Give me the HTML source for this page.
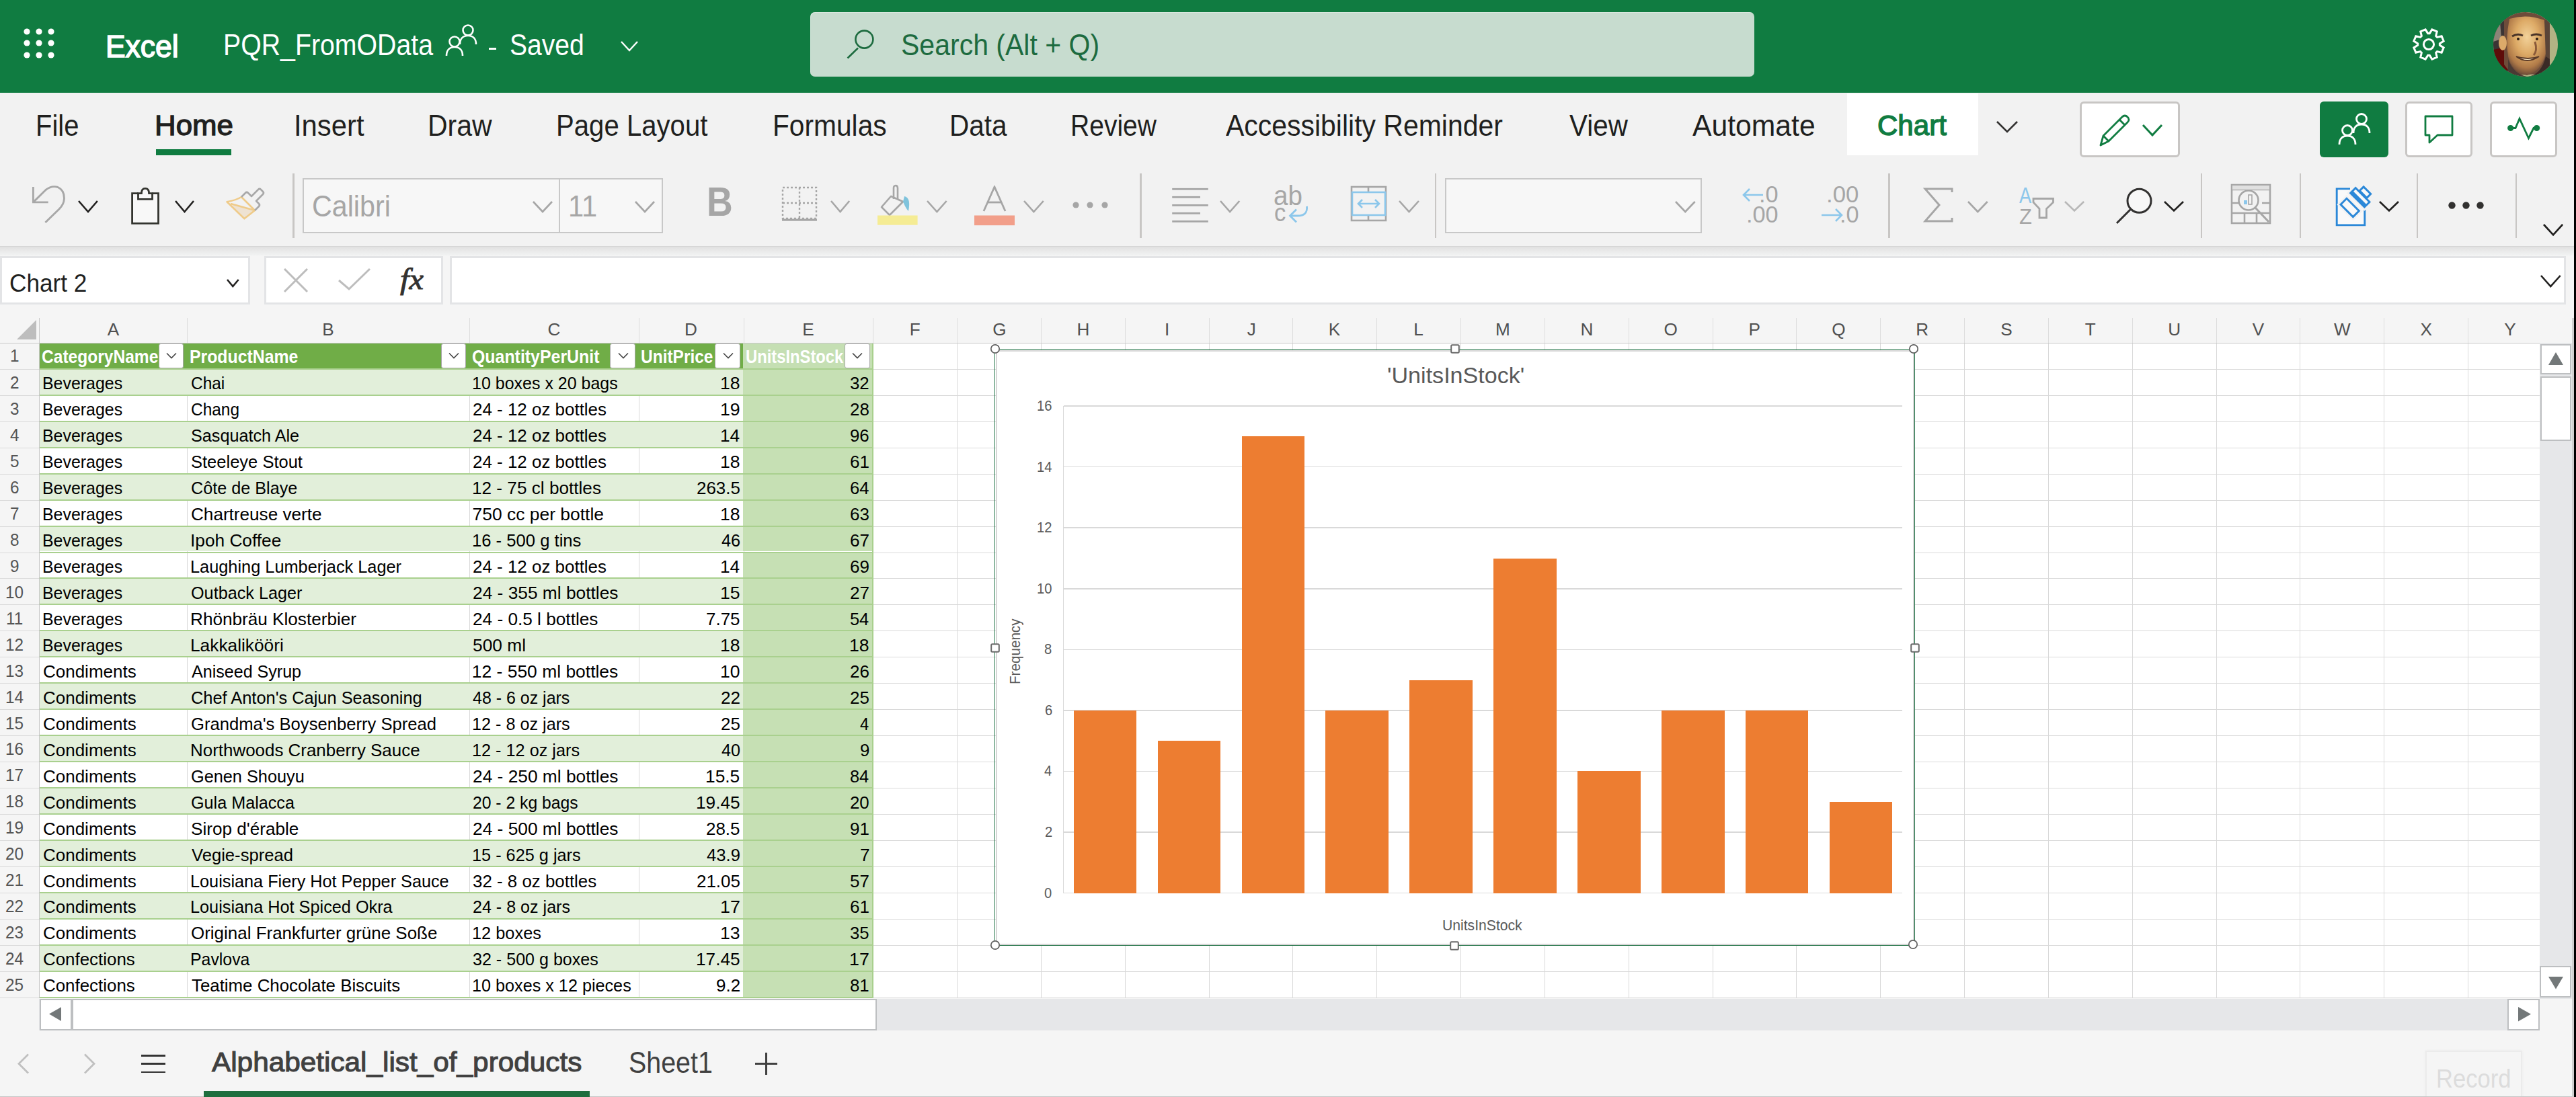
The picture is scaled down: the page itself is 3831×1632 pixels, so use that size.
<!DOCTYPE html><html><head><meta charset="utf-8"><style>
html,body{margin:0;padding:0;width:3831px;height:1632px;overflow:hidden;background:#f5f5f5}
.r{position:absolute}
.t{position:absolute;white-space:nowrap;font-family:"Liberation Sans",sans-serif}
</style></head><body>
<div class="r" style="left:0.00px;top:0.00px;width:3831.00px;height:1632.00px;background:#F5F5F5;"></div>
<div class="r" style="left:0.00px;top:0.00px;width:3831.00px;height:138.00px;background:#107C41;"></div>
<div class="r" style="left:0.00px;top:138.00px;width:3831.00px;height:228.00px;background:#F2F2F2;"></div>
<div class="r" style="left:0.00px;top:365.50px;width:3831.00px;height:15.50px;background:linear-gradient(#D0D0D0,#E2E2E2 12%,#E8E8E8 40%,#F0F1F1 85%,#F5F5F5);"></div>
<svg class="r" style="left:35.00px;top:41.50px" width="10" height="10" viewBox="0 0 10 10"><circle cx="5" cy="5" r="4.6" fill="#fff"/></svg>
<svg class="r" style="left:35.00px;top:59.30px" width="10" height="10" viewBox="0 0 10 10"><circle cx="5" cy="5" r="4.6" fill="#fff"/></svg>
<svg class="r" style="left:35.00px;top:77.20px" width="10" height="10" viewBox="0 0 10 10"><circle cx="5" cy="5" r="4.6" fill="#fff"/></svg>
<svg class="r" style="left:53.40px;top:41.50px" width="10" height="10" viewBox="0 0 10 10"><circle cx="5" cy="5" r="4.6" fill="#fff"/></svg>
<svg class="r" style="left:53.40px;top:59.30px" width="10" height="10" viewBox="0 0 10 10"><circle cx="5" cy="5" r="4.6" fill="#fff"/></svg>
<svg class="r" style="left:53.40px;top:77.20px" width="10" height="10" viewBox="0 0 10 10"><circle cx="5" cy="5" r="4.6" fill="#fff"/></svg>
<svg class="r" style="left:71.30px;top:41.50px" width="10" height="10" viewBox="0 0 10 10"><circle cx="5" cy="5" r="4.6" fill="#fff"/></svg>
<svg class="r" style="left:71.30px;top:59.30px" width="10" height="10" viewBox="0 0 10 10"><circle cx="5" cy="5" r="4.6" fill="#fff"/></svg>
<svg class="r" style="left:71.30px;top:77.20px" width="10" height="10" viewBox="0 0 10 10"><circle cx="5" cy="5" r="4.6" fill="#fff"/></svg>
<div class="t" style="left:157.37px;top:45.82px;font-size:46.51px;line-height:46.51px;color:#FFFFFF;transform:scaleX(0.9551);transform-origin:0 0;-webkit-text-stroke:1.6px #FFFFFF;">Excel</div>
<div class="t" style="left:332.46px;top:46.08px;font-size:43.61px;line-height:43.61px;color:#FFFFFF;transform:scaleX(0.9003);transform-origin:0 0;">PQR_FromOData</div>
<svg class="r" style="left:660.00px;top:34.00px" width="56" height="52" viewBox="0 0 56 52"><g fill="none" stroke="#fff" stroke-width="2.6"><circle cx="16" cy="28" r="7.5"/><path d="M4 49 C4 40 9 36 16 36 C23 36 28 40 28 49"/><circle cx="36" cy="11" r="7.5"/><path d="M24 32 C24 23 29 19 36 19 C43 19 48 23 48 32"/></g></svg>
<div class="r" style="left:727.00px;top:71.00px;width:11.00px;height:2.60px;background:#FFFFFF;"></div>
<div class="t" style="left:758.21px;top:46.08px;font-size:43.61px;line-height:43.61px;color:#FFFFFF;transform:scaleX(0.8957);transform-origin:0 0;">Saved</div>
<svg class="r" style="left:922.00px;top:60.00px" width="28" height="18" viewBox="0 0 28 18"><path d="M2 2 L14 15 L26 2" fill="none" stroke="#fff" stroke-width="2.4"/></svg>
<div class="r" style="left:1205.00px;top:18.00px;width:1404.00px;height:95.60px;background:#C7DCCF;border-radius:7px;box-shadow:inset 1px 1px 0 rgba(255,255,255,0.35)"></div>
<svg class="r" style="left:1255.00px;top:40.00px" width="50" height="52" viewBox="0 0 50 52"><g fill="none" stroke="#1D6B3F" stroke-width="2.6"><circle cx="30.4" cy="18.6" r="13"/><path d="M21 31.5 L5.5 46.5"/></g></svg>
<div class="t" style="left:1339.52px;top:45.98px;font-size:43.61px;line-height:43.61px;color:#1D6B3F;transform:scaleX(0.9405);transform-origin:0 0;">Search (Alt + Q)</div>
<svg class="r" style="left:3587.00px;top:40.80px" width="50" height="50" viewBox="0 0 50 50"><path d="M26.29 8.65 L29.91 2.84 L37.20 5.86 L35.65 12.53 L37.47 14.35 L44.14 12.80 L47.16 20.09 L41.35 23.71 L41.35 26.29 L47.16 29.91 L44.14 37.20 L37.47 35.65 L35.65 37.47 L37.20 44.14 L29.91 47.16 L26.29 41.35 L23.71 41.35 L20.09 47.16 L12.80 44.14 L14.35 37.47 L12.53 35.65 L5.86 37.20 L2.84 29.91 L8.65 26.29 L8.65 23.71 L2.84 20.09 L5.86 12.80 L12.53 14.35 L14.35 12.53 L12.80 5.86 L20.09 2.84 L23.71 8.65 Z" fill="none" stroke="#fff" stroke-width="3" stroke-linejoin="miter"/><circle cx="25" cy="25" r="7.6" fill="none" stroke="#fff" stroke-width="3"/></svg>
<svg class="r" style="left:3708.00px;top:18.00px" width="96" height="96" viewBox="0 0 96 96"><defs><clipPath id="av"><circle cx="48" cy="48" r="48"/></clipPath>
<radialGradient id="sk" cx="0.5" cy="0.35" r="0.65"><stop offset="0" stop-color="#F2D29A"/><stop offset="0.45" stop-color="#DDAA66"/><stop offset="0.8" stop-color="#B07A48"/><stop offset="1" stop-color="#6A4A38"/></radialGradient></defs>
<g clip-path="url(#av)"><rect width="96" height="96" fill="#B2B384"/>
<path d="M0 0 L24 0 L22 96 L0 96Z" fill="#3C3434"/>
<path d="M0 18 L10 14 L12 40 L0 44Z" fill="#8C8478"/>
<path d="M0 56 L18 52 L26 80 L14 96 L0 96Z" fill="#5E0C0A"/>
<path d="M16 4 Q48 -6 80 8 L82 80 L70 92 L28 94 L16 78Z" fill="#6E4C3A"/>
<path d="M24 10 Q50 2 76 12 Q82 40 78 62 Q72 88 50 94 Q28 90 22 66 Q18 40 24 10Z" fill="url(#sk)"/>
<ellipse cx="14" cy="46" rx="6" ry="11" fill="#DCAA6A"/>
<path d="M28 36 Q36 31 44 35" stroke="#4A3428" stroke-width="3" fill="none"/><path d="M56 35 Q64 31 72 35" stroke="#4A3428" stroke-width="3" fill="none"/>
<circle cx="37" cy="40" r="2" fill="#2A1A14"/><circle cx="65" cy="40" r="2" fill="#2A1A14"/>
<path d="M62 44 Q66 58 60 64" stroke="#8A5A3A" stroke-width="3" fill="none"/>
<path d="M34 66 Q50 78 68 66 Q52 72 34 66Z" fill="#F6E6C4" stroke="#5A3A28" stroke-width="1.8"/>
<path d="M22 70 Q30 92 50 96 L22 96Z" fill="#4A3A34"/><path d="M78 66 Q72 92 52 96 L84 96 L84 66Z" fill="#3A2A26"/>
<path d="M76 12 L84 10 L84 70 L78 66Z" fill="#5A4438"/></g></svg>
<div class="t" style="left:52.62px;top:164.35px;font-size:45.06px;line-height:45.06px;color:#201F1E;transform:scaleX(0.8866);transform-origin:0 0;">File</div>
<div class="t" style="left:437.20px;top:164.35px;font-size:45.06px;line-height:45.06px;color:#201F1E;transform:scaleX(0.9280);transform-origin:0 0;">Insert</div>
<div class="t" style="left:636.03px;top:164.35px;font-size:45.06px;line-height:45.06px;color:#201F1E;transform:scaleX(0.9105);transform-origin:0 0;">Draw</div>
<div class="t" style="left:827.00px;top:164.35px;font-size:45.06px;line-height:45.06px;color:#201F1E;transform:scaleX(0.8909);transform-origin:0 0;">Page Layout</div>
<div class="t" style="left:1149.16px;top:164.35px;font-size:45.06px;line-height:45.06px;color:#201F1E;transform:scaleX(0.9036);transform-origin:0 0;">Formulas</div>
<div class="t" style="left:1411.98px;top:164.35px;font-size:45.06px;line-height:45.06px;color:#201F1E;transform:scaleX(0.8985);transform-origin:0 0;">Data</div>
<div class="t" style="left:1592.29px;top:164.35px;font-size:45.06px;line-height:45.06px;color:#201F1E;transform:scaleX(0.8663);transform-origin:0 0;">Review</div>
<div class="t" style="left:1822.61px;top:164.35px;font-size:45.06px;line-height:45.06px;color:#201F1E;transform:scaleX(0.9090);transform-origin:0 0;">Accessibility Reminder</div>
<div class="t" style="left:2334.12px;top:164.35px;font-size:45.06px;line-height:45.06px;color:#201F1E;transform:scaleX(0.8968);transform-origin:0 0;">View</div>
<div class="t" style="left:2516.91px;top:164.35px;font-size:45.06px;line-height:45.06px;color:#201F1E;transform:scaleX(0.9476);transform-origin:0 0;">Automate</div>
<div class="t" style="left:229.50px;top:165.30px;font-size:43.17px;line-height:43.17px;color:#201F1E;transform:scaleX(1.0155);transform-origin:0 0;-webkit-text-stroke:1.3px #201F1E;">Home</div>
<div class="r" style="left:232.00px;top:222.30px;width:112.20px;height:8.70px;background:#107C41;"></div>
<div class="r" style="left:2747.00px;top:139.00px;width:195.00px;height:92.00px;background:#FFFFFF;"></div>
<div class="t" style="left:2792.05px;top:165.37px;font-size:43.02px;line-height:43.02px;color:#107C41;transform:scaleX(0.9776);transform-origin:0 0;-webkit-text-stroke:1.4px #107C41;">Chart</div>
<svg class="r" style="left:2968.00px;top:178.00px" width="34" height="22" viewBox="0 0 34 22"><path d="M2 3 L17 18 L32 3" fill="none" stroke="#323130" stroke-width="2.6"/></svg>
<div class="r" style="left:3093.00px;top:150.50px;width:148.60px;height:83.00px;background:#FFFFFF;border:3px solid #C8C6C4;border-radius:6px;box-sizing:border-box;"></div>
<svg class="r" style="left:3118.00px;top:168.00px" width="50" height="54" viewBox="0 0 50 54"><g fill="none" stroke="#107C41" stroke-width="2.8" stroke-linejoin="round"><path d="M6 48 L10 34 L38 6 Q42 2 46 6 Q50 10 46 14 L18 42 Z"/><path d="M34 10 L42 18"/><path d="M10 34 L18 42"/></g></svg>
<svg class="r" style="left:3184.00px;top:183.00px" width="34" height="22" viewBox="0 0 34 22"><path d="M3 3 L17 18 L31 3" fill="none" stroke="#107C41" stroke-width="3"/></svg>
<div class="r" style="left:3450.00px;top:150.50px;width:101.70px;height:83.00px;background:#107C41;border-radius:6px;"></div>
<svg class="r" style="left:3474.00px;top:168.00px" width="56" height="52" viewBox="0 0 56 52"><g fill="none" stroke="#fff" stroke-width="2.8"><circle cx="17" cy="26" r="7.5"/><path d="M5 47 C5 38 10 34 17 34 C24 34 29 38 29 47"/><circle cx="38" cy="9" r="7.5"/><path d="M26 30 C26 21 31 17 38 17 C45 17 50 21 50 30"/></g></svg>
<div class="r" style="left:3576.50px;top:150.50px;width:100.50px;height:83.00px;background:#FFFFFF;border:3px solid #C8C6C4;border-radius:6px;box-sizing:border-box;"></div>
<svg class="r" style="left:3604.00px;top:170.00px" width="46" height="46" viewBox="0 0 46 46"><path d="M3 3 L43 3 L43 31 L21 31 L9 42 L9 31 L3 31 Z" fill="none" stroke="#107C41" stroke-width="2.8" stroke-linejoin="round"/></svg>
<div class="r" style="left:3702.60px;top:150.50px;width:100.40px;height:83.00px;background:#FFFFFF;border:3px solid #C8C6C4;border-radius:6px;box-sizing:border-box;"></div>
<svg class="r" style="left:3725.00px;top:172.00px" width="56" height="40" viewBox="0 0 56 40"><g fill="none" stroke="#107C41" stroke-width="2.8" stroke-linejoin="miter"><path d="M8.7 18.5 L16 18.5 L22 4.5 L35.5 33.5 L43 18.5 L47.6 18.5"/></g><circle cx="8.7" cy="18.5" r="4.6" fill="#107C41"/><circle cx="47.6" cy="18.5" r="4.6" fill="#107C41"/></svg>
<svg class="r" style="left:44.00px;top:274.00px" width="56" height="62" viewBox="0 0 56 62"><g fill="none" stroke="#A8A8A8" stroke-width="2.9"><path d="M5.4 3.9 L5.4 26.9 L27.7 26.9"/><path d="M5.4 26.9 L24 8.5 Q33 1.5 42 4.5 Q52 9 51.4 22 Q51 30 44 37 L23.4 57"/></g></svg>
<svg class="r" style="left:114.50px;top:297.00px" width="31.900000000000006" height="20" viewBox="0 0 31.900000000000006 20"><path d="M2 2 L16.0 18.0 L29.9 2" fill="none" stroke="#201F1E" stroke-width="2.6"/></svg>
<svg class="r" style="left:193.00px;top:278.00px" width="46" height="58" viewBox="0 0 46 58"><g fill="none" stroke="#33342F" stroke-width="2.8"><path d="M12.5 9.7 L3.6 9.7 L3.6 54.4 L42.5 54.4 L42.5 9.7 L33.5 9.7" fill="#F8F8F8"/><path d="M12.5 9.7 L12.5 18.3 L33.5 18.3 L33.5 9.7 L28.6 9.7 Q28.6 2.4 23 2.4 Q17.4 2.4 17.4 9.7 Z" fill="#F8F8F8"/></g></svg>
<svg class="r" style="left:259.00px;top:297.00px" width="31" height="20" viewBox="0 0 31 20"><path d="M2 2 L15.5 18.0 L29.0 2" fill="none" stroke="#201F1E" stroke-width="2.6"/></svg>
<svg class="r" style="left:335.00px;top:276.00px" width="62" height="54" viewBox="0 0 62 54"><path d="M8 27 L44 37 L28.4 49.3 Z" fill="#EEE2D2"/><g fill="none" stroke-width="2.6" stroke-linejoin="round"><path d="M2.5 24.2 Q16 22 24 17 L44 37 L28.4 49.3 Z M8 27 L44 37" stroke="#EFCB8A"/><path d="M24 17 L30 11 Q32 9 34 11 L39 16 L49 6 Q51 4 53 6 L56 9 Q58 11 56 13 L46 23 L50 27 Q52 29 50 31 L44 37" stroke="#A8A8A8"/></g></svg>
<div class="r" style="left:435.40px;top:258.00px;width:2.60px;height:96.00px;background:#C8C6C4;"></div>
<div class="r" style="left:450.00px;top:265.00px;width:536.00px;height:81.70px;background:#F7F7F7;border:2.5px solid #C8C8C8;box-sizing:border-box;"></div>
<div class="r" style="left:830.80px;top:265.00px;width:2.50px;height:81.70px;background:#C8C8C8;"></div>
<div class="t" style="left:463.92px;top:285.78px;font-size:43.61px;line-height:43.61px;color:#A6A6A6;transform:scaleX(0.9451);transform-origin:0 0;">Calibri</div>
<svg class="r" style="left:791.00px;top:298.00px" width="32" height="19" viewBox="0 0 32 19"><path d="M2 2 L16.0 17.0 L30.0 2" fill="none" stroke="#A6A6A6" stroke-width="2.6"/></svg>
<div class="t" style="left:844.85px;top:285.78px;font-size:43.61px;line-height:43.61px;color:#A6A6A6;transform:scaleX(0.9548);transform-origin:0 0;">11</div>
<svg class="r" style="left:943.00px;top:298.00px" width="32" height="19" viewBox="0 0 32 19"><path d="M2 2 L16.0 17.0 L30.0 2" fill="none" stroke="#A6A6A6" stroke-width="2.6"/></svg>
<div class="t" style="left:1051.20px;top:270.31px;font-size:61.05px;line-height:61.05px;color:#A6A6A6;font-weight:bold;transform:scaleX(0.8790);transform-origin:0 0;">B</div>
<svg class="r" style="left:1162.00px;top:276.00px" width="56" height="56" viewBox="0 0 56 56"><g fill="none" stroke="#A6A6A6" stroke-width="2.4" stroke-dasharray="3 3"><rect x="2" y="3" width="50" height="46"/><path d="M27 3 L27 49 M2 26 L52 26"/></g><rect x="1" y="49.5" width="52" height="3.2" fill="#A6A6A6"/></svg>
<svg class="r" style="left:1233.80px;top:297.00px" width="31.200000000000045" height="20" viewBox="0 0 31.200000000000045 20"><path d="M2 2 L15.6 18.0 L29.2 2" fill="none" stroke="#A6A6A6" stroke-width="2.6"/></svg>
<svg class="r" style="left:1305.00px;top:274.00px" width="62" height="62" viewBox="0 0 62 62"><g fill="none" stroke="#A6A6A6" stroke-width="2.6" stroke-linejoin="round"><path d="M20 18 L6 34 L18 46 L38 26 Z"/><path d="M24 22 L24 6 Q24 2 27 2 Q30 2 30 6 L30 22"/></g><path d="M40 18 Q50 20 46 40 Q42 36 38 26 Z" fill="#7FC3DC"/><rect x="0" y="46.5" width="59.6" height="14.2" fill="#F5EC94"/></svg>
<svg class="r" style="left:1377.00px;top:297.00px" width="32.700000000000045" height="20" viewBox="0 0 32.700000000000045 20"><path d="M2 2 L16.4 18.0 L30.7 2" fill="none" stroke="#A6A6A6" stroke-width="2.6"/></svg>
<svg class="r" style="left:1449.00px;top:276.00px" width="62" height="60" viewBox="0 0 62 60"><path d="M14 38 L30 2 L46 38" fill="none" stroke="#A6A6A6" stroke-width="2.8"/><path d="M20 25 L40 25" stroke="#A6A6A6" stroke-width="2.8"/><rect x="0" y="44.5" width="60" height="14.7" fill="#F29F8A"/></svg>
<svg class="r" style="left:1521.00px;top:297.00px" width="32.799999999999955" height="20" viewBox="0 0 32.799999999999955 20"><path d="M2 2 L16.4 18.0 L30.8 2" fill="none" stroke="#A6A6A6" stroke-width="2.6"/></svg>
<svg class="r" style="left:1594.60px;top:300.40px" width="10" height="10" viewBox="0 0 10 10"><circle cx="5" cy="5" r="4.6" fill="#A6A6A6"/></svg>
<svg class="r" style="left:1616.40px;top:300.40px" width="10" height="10" viewBox="0 0 10 10"><circle cx="5" cy="5" r="4.6" fill="#A6A6A6"/></svg>
<svg class="r" style="left:1638.00px;top:300.40px" width="10" height="10" viewBox="0 0 10 10"><circle cx="5" cy="5" r="4.6" fill="#A6A6A6"/></svg>
<div class="r" style="left:1695.40px;top:258.00px;width:2.60px;height:96.00px;background:#C8C6C4;"></div>
<svg class="r" style="left:1742.00px;top:278.00px" width="56" height="54" viewBox="0 0 56 54"><rect x="1.2" y="1.9" width="53.6" height="2.8" fill="#A6A6A6"/><rect x="1.2" y="13.9" width="41.8" height="2.8" fill="#A6A6A6"/><rect x="1.2" y="26" width="53.6" height="2.8" fill="#A6A6A6"/><rect x="1.2" y="37.9" width="41.8" height="2.8" fill="#A6A6A6"/><rect x="1.2" y="50" width="53.6" height="2.8" fill="#A6A6A6"/></svg>
<svg class="r" style="left:1812.70px;top:297.00px" width="32.299999999999955" height="20" viewBox="0 0 32.299999999999955 20"><path d="M2 2 L16.1 18.0 L30.3 2" fill="none" stroke="#A6A6A6" stroke-width="2.6"/></svg>
<div class="t" style="left:1893.67px;top:272.11px;font-size:40.26px;line-height:40.26px;color:#A6A6A6;transform:scaleX(0.9589);transform-origin:0 0;">ab</div>
<div class="t" style="left:1894.58px;top:298.86px;font-size:36.77px;line-height:36.77px;color:#A6A6A6;transform:scaleX(0.9434);transform-origin:0 0;">c</div>
<svg class="r" style="left:1912.00px;top:302.00px" width="36" height="34" viewBox="0 0 36 34"><path d="M31.5 5 Q33 19 18 19 L7 19" fill="none" stroke="#8CC7EB" stroke-width="2.8"/><path d="M16 9.5 L6.5 19 L16 28.5" fill="none" stroke="#8CC7EB" stroke-width="2.8"/></svg>
<svg class="r" style="left:2008.00px;top:276.00px" width="56" height="56" viewBox="0 0 56 56"><g fill="none" stroke="#A6A6A6" stroke-width="2.6"><rect x="2" y="2" width="51" height="50"/><path d="M27 2 L27 10 M27 44 L27 52"/></g><rect x="3" y="10" width="49" height="34" fill="none" stroke="#8CC7EB" stroke-width="2.6"/><path d="M12 27 L43 27 M18 21 L12 27 L18 33 M37 21 L43 27 L37 33" fill="none" stroke="#8CC7EB" stroke-width="2.6"/></svg>
<svg class="r" style="left:2079.00px;top:297.00px" width="33" height="20" viewBox="0 0 33 20"><path d="M2 2 L16.5 18.0 L31.0 2" fill="none" stroke="#A6A6A6" stroke-width="2.6"/></svg>
<div class="r" style="left:2133.70px;top:258.00px;width:2.60px;height:96.00px;background:#C8C6C4;"></div>
<div class="r" style="left:2148.60px;top:264.70px;width:382.40px;height:82.30px;background:#F7F7F7;border:2.5px solid #C8C8C8;box-sizing:border-box;"></div>
<svg class="r" style="left:2490.00px;top:298.00px" width="32.69999999999982" height="19" viewBox="0 0 32.69999999999982 19"><path d="M2 2 L16.3 17.0 L30.7 2" fill="none" stroke="#A6A6A6" stroke-width="2.6"/></svg>
<div class="t" style="left:2615.87px;top:272.08px;font-size:34.16px;line-height:34.16px;color:#A6A6A6;transform:scaleX(1.0083);transform-origin:0 0;">.0</div>
<div class="t" style="left:2596.89px;top:302.08px;font-size:34.16px;line-height:34.16px;color:#A6A6A6;transform:scaleX(1.0046);transform-origin:0 0;">.00</div>
<svg class="r" style="left:2590.00px;top:276.00px" width="34" height="28" viewBox="0 0 34 28"><path d="M3 14 L32 14 M12 5 L3 14 L12 23" fill="none" stroke="#8CC7EB" stroke-width="2.6"/></svg>
<div class="t" style="left:2716.14px;top:272.08px;font-size:34.16px;line-height:34.16px;color:#A6A6A6;transform:scaleX(1.0186);transform-origin:0 0;">.00</div>
<div class="t" style="left:2735.89px;top:302.08px;font-size:34.16px;line-height:34.16px;color:#A6A6A6;transform:scaleX(1.0041);transform-origin:0 0;">.0</div>
<svg class="r" style="left:2707.00px;top:306.00px" width="36" height="28" viewBox="0 0 36 28"><path d="M2 14 L32 14 M23 5 L32 14 L23 23" fill="none" stroke="#8CC7EB" stroke-width="2.6"/></svg>
<div class="r" style="left:2808.20px;top:258.00px;width:2.60px;height:96.00px;background:#C8C6C4;"></div>
<svg class="r" style="left:2860.00px;top:279.00px" width="46" height="53" viewBox="0 0 46 53"><path d="M43 7 L43 2 L3 2 L24 26 L3 50 L43 50 L43 45" fill="none" stroke="#A6A6A6" stroke-width="3"/></svg>
<svg class="r" style="left:2925.00px;top:298.00px" width="32.69999999999982" height="19" viewBox="0 0 32.69999999999982 19"><path d="M2 2 L16.3 17.0 L30.7 2" fill="none" stroke="#A6A6A6" stroke-width="2.6"/></svg>
<div class="t" style="left:3003.42px;top:274.45px;font-size:33.72px;line-height:33.72px;color:#8CC7EB;transform:scaleX(0.8072);transform-origin:0 0;">A</div>
<div class="t" style="left:3003.03px;top:306.23px;font-size:31.98px;line-height:31.98px;color:#A6A6A6;transform:scaleX(0.9659);transform-origin:0 0;">Z</div>
<svg class="r" style="left:3022.00px;top:292.00px" width="34" height="34" viewBox="0 0 34 34"><path d="M2 3.5 L31.5 3.5 L31.5 9 L21.5 18.5 L21.5 32 L11 32 L11 18.5 L2 9 Z" fill="none" stroke="#A6A6A6" stroke-width="2.8" stroke-linejoin="miter"/></svg>
<svg class="r" style="left:3069.40px;top:298.00px" width="32.09999999999991" height="17.5" viewBox="0 0 32.09999999999991 17.5"><path d="M2 2 L16.0 15.5 L30.1 2" fill="none" stroke="#B8B8B8" stroke-width="2.6"/></svg>
<svg class="r" style="left:3145.00px;top:276.00px" width="58" height="60" viewBox="0 0 58 60"><circle cx="36.5" cy="22.8" r="17.5" fill="#F7F7F7" stroke="#323130" stroke-width="3"/><path d="M24 35 L3 56" stroke="#323130" stroke-width="3"/></svg>
<svg class="r" style="left:3216.50px;top:298.00px" width="32.0" height="17.5" viewBox="0 0 32.0 17.5"><path d="M2 2 L16.0 15.5 L30.0 2" fill="none" stroke="#201F1E" stroke-width="2.6"/></svg>
<div class="r" style="left:3272.70px;top:258.00px;width:2.60px;height:96.00px;background:#C8C6C4;"></div>
<svg class="r" style="left:3316.00px;top:272.00px" width="64" height="64" viewBox="0 0 64 64"><g fill="none" stroke="#A6A6A6" stroke-width="2.6"><rect x="3" y="3" width="57" height="57"/><path d="M3 10 L60 10"/><path d="M3 30 L14 30 M48 30 L60 30 M3 45 L60 45 M22 45 L22 60 M40 45 L40 60" /></g><rect x="4" y="4" width="55" height="6" fill="#E0E0E0"/><circle cx="28" cy="26" r="14.5" fill="#F2F2F2" stroke="#A6A6A6" stroke-width="2.6"/><path d="M38 37 L58 58" stroke="#A6A6A6" stroke-width="3"/><rect x="21" y="26" width="5" height="6" fill="#8CC7EB"/><rect x="28" y="18" width="5" height="14" fill="none" stroke="#A6A6A6" stroke-width="1.6"/></svg>
<div class="r" style="left:3419.70px;top:258.00px;width:2.60px;height:96.00px;background:#C8C6C4;"></div>
<svg class="r" style="left:3461.00px;top:266.40px" width="80" height="80" viewBox="0 0 80 80"><rect x="14.2" y="14.9" width="41.6" height="54" fill="#F9F9F9"/><path d="M14.2 14.9 L34 14.9 M14.2 13.5 L14.2 68.9 L55.8 68.9 L55.8 46" fill="none" stroke="#2B88D8" stroke-width="2.9"/><g transform="rotate(-45 48.8 27.8)"><g fill="#F4F4F4" stroke="#F2F2F2" stroke-width="8"><rect x="21.1" y="14.8" width="12.6" height="26"/><rect x="43.4" y="13.1" width="10.8" height="29.4"/><rect x="55.5" y="20.3" width="8.3" height="15"/></g><g fill="#F9F9F9" stroke="#2B88D8" stroke-width="2.9"><rect x="21.1" y="14.8" width="12.6" height="26"/><rect x="43.4" y="13.1" width="10.8" height="29.4"/><rect x="55.5" y="20.3" width="8.3" height="15"/></g><rect x="43.4" y="13.1" width="4.8" height="29.4" fill="#2B88D8"/></g></svg>
<svg class="r" style="left:3537.00px;top:298.00px" width="32" height="17.5" viewBox="0 0 32 17.5"><path d="M2 2 L16.0 15.5 L30.0 2" fill="none" stroke="#201F1E" stroke-width="2.6"/></svg>
<div class="r" style="left:3593.70px;top:258.00px;width:2.60px;height:96.00px;background:#C8C6C4;"></div>
<svg class="r" style="left:3640.50px;top:299.50px" width="11" height="11" viewBox="0 0 11 11"><circle cx="5.5" cy="5.5" r="5.2" fill="#323130"/></svg>
<svg class="r" style="left:3661.50px;top:299.50px" width="11" height="11" viewBox="0 0 11 11"><circle cx="5.5" cy="5.5" r="5.2" fill="#323130"/></svg>
<svg class="r" style="left:3682.50px;top:299.50px" width="11" height="11" viewBox="0 0 11 11"><circle cx="5.5" cy="5.5" r="5.2" fill="#323130"/></svg>
<div class="r" style="left:3740.70px;top:258.00px;width:2.60px;height:96.00px;background:#C8C6C4;"></div>
<svg class="r" style="left:3780.70px;top:332.00px" width="32.100000000000364" height="19.399999999999977" viewBox="0 0 32.100000000000364 19.399999999999977"><path d="M2 2 L16.1 17.4 L30.1 2" fill="none" stroke="#201F1E" stroke-width="2.6"/></svg>
<div class="r" style="left:0.00px;top:381.00px;width:371.70px;height:72.00px;background:#fff;border:3px solid #E3E4E6;box-sizing:border-box;"></div>
<div class="t" style="left:14.20px;top:403.12px;font-size:37.06px;line-height:37.06px;color:#201F1E;transform:scaleX(0.9500);transform-origin:0 0;">Chart 2</div>
<svg class="r" style="left:336.00px;top:414.00px" width="20.69999999999999" height="14" viewBox="0 0 20.69999999999999 14"><path d="M2 2 L10.3 12.0 L18.7 2" fill="none" stroke="#201F1E" stroke-width="2.6"/></svg>
<div class="r" style="left:392.90px;top:381.00px;width:266.40px;height:72.00px;background:#fff;border:3px solid #E3E4E6;box-sizing:border-box;"></div>
<svg class="r" style="left:420.00px;top:397.00px" width="40" height="40" viewBox="0 0 40 40"><path d="M3 3 L37 37 M37 3 L3 37" stroke="#BDBDBD" stroke-width="3"/></svg>
<svg class="r" style="left:501.00px;top:397.00px" width="52" height="38" viewBox="0 0 52 38"><path d="M3 20 L18 33 L49 3" fill="none" stroke="#BDBDBD" stroke-width="3"/></svg>
<div class="t" style="left:595px;top:389.5px;font-family:'Liberation Serif',serif;font-style:italic;font-size:44px;line-height:52px;color:#323130;-webkit-text-stroke:0.9px #323130;transform:scaleX(1.1);transform-origin:0 0">fx</div>
<div class="r" style="left:669.00px;top:381.00px;width:3146.50px;height:72.00px;background:#fff;border:3px solid #E3E4E6;box-sizing:border-box;"></div>
<svg class="r" style="left:3777.00px;top:407.60px" width="32.69999999999982" height="20.099999999999966" viewBox="0 0 32.69999999999982 20.099999999999966"><path d="M2 2 L16.3 18.1 L30.7 2" fill="none" stroke="#201F1E" stroke-width="2.6"/></svg>
<div class="r" style="left:58.40px;top:510.40px;width:3718.30px;height:974.25px;background:#FFFFFF;"></div>
<div class="r" style="left:58.40px;top:548.85px;width:3718.30px;height:1.00px;background:#D9D9D9;"></div>
<div class="r" style="left:58.40px;top:587.80px;width:3718.30px;height:1.00px;background:#D9D9D9;"></div>
<div class="r" style="left:58.40px;top:626.75px;width:3718.30px;height:1.00px;background:#D9D9D9;"></div>
<div class="r" style="left:58.40px;top:665.70px;width:3718.30px;height:1.00px;background:#D9D9D9;"></div>
<div class="r" style="left:58.40px;top:704.65px;width:3718.30px;height:1.00px;background:#D9D9D9;"></div>
<div class="r" style="left:58.40px;top:743.60px;width:3718.30px;height:1.00px;background:#D9D9D9;"></div>
<div class="r" style="left:58.40px;top:782.55px;width:3718.30px;height:1.00px;background:#D9D9D9;"></div>
<div class="r" style="left:58.40px;top:821.50px;width:3718.30px;height:1.00px;background:#D9D9D9;"></div>
<div class="r" style="left:58.40px;top:860.45px;width:3718.30px;height:1.00px;background:#D9D9D9;"></div>
<div class="r" style="left:58.40px;top:899.40px;width:3718.30px;height:1.00px;background:#D9D9D9;"></div>
<div class="r" style="left:58.40px;top:938.35px;width:3718.30px;height:1.00px;background:#D9D9D9;"></div>
<div class="r" style="left:58.40px;top:977.30px;width:3718.30px;height:1.00px;background:#D9D9D9;"></div>
<div class="r" style="left:58.40px;top:1016.25px;width:3718.30px;height:1.00px;background:#D9D9D9;"></div>
<div class="r" style="left:58.40px;top:1055.20px;width:3718.30px;height:1.00px;background:#D9D9D9;"></div>
<div class="r" style="left:58.40px;top:1094.15px;width:3718.30px;height:1.00px;background:#D9D9D9;"></div>
<div class="r" style="left:58.40px;top:1133.10px;width:3718.30px;height:1.00px;background:#D9D9D9;"></div>
<div class="r" style="left:58.40px;top:1172.05px;width:3718.30px;height:1.00px;background:#D9D9D9;"></div>
<div class="r" style="left:58.40px;top:1211.00px;width:3718.30px;height:1.00px;background:#D9D9D9;"></div>
<div class="r" style="left:58.40px;top:1249.95px;width:3718.30px;height:1.00px;background:#D9D9D9;"></div>
<div class="r" style="left:58.40px;top:1288.90px;width:3718.30px;height:1.00px;background:#D9D9D9;"></div>
<div class="r" style="left:58.40px;top:1327.85px;width:3718.30px;height:1.00px;background:#D9D9D9;"></div>
<div class="r" style="left:58.40px;top:1366.80px;width:3718.30px;height:1.00px;background:#D9D9D9;"></div>
<div class="r" style="left:58.40px;top:1405.75px;width:3718.30px;height:1.00px;background:#D9D9D9;"></div>
<div class="r" style="left:58.40px;top:1444.70px;width:3718.30px;height:1.00px;background:#D9D9D9;"></div>
<div class="r" style="left:58.40px;top:1483.65px;width:3718.30px;height:1.00px;background:#D9D9D9;"></div>
<div class="r" style="left:278.00px;top:510.40px;width:1.00px;height:974.25px;background:#D9D9D9;"></div>
<div class="r" style="left:697.90px;top:510.40px;width:1.00px;height:974.25px;background:#D9D9D9;"></div>
<div class="r" style="left:949.50px;top:510.40px;width:1.00px;height:974.25px;background:#D9D9D9;"></div>
<div class="r" style="left:1105.50px;top:510.40px;width:1.00px;height:974.25px;background:#D9D9D9;"></div>
<div class="r" style="left:1298.30px;top:510.40px;width:1.00px;height:974.25px;background:#D9D9D9;"></div>
<div class="r" style="left:1423.13px;top:510.40px;width:1.00px;height:974.25px;background:#D9D9D9;"></div>
<div class="r" style="left:1547.96px;top:510.40px;width:1.00px;height:974.25px;background:#D9D9D9;"></div>
<div class="r" style="left:1672.79px;top:510.40px;width:1.00px;height:974.25px;background:#D9D9D9;"></div>
<div class="r" style="left:1797.62px;top:510.40px;width:1.00px;height:974.25px;background:#D9D9D9;"></div>
<div class="r" style="left:1922.45px;top:510.40px;width:1.00px;height:974.25px;background:#D9D9D9;"></div>
<div class="r" style="left:2047.28px;top:510.40px;width:1.00px;height:974.25px;background:#D9D9D9;"></div>
<div class="r" style="left:2172.11px;top:510.40px;width:1.00px;height:974.25px;background:#D9D9D9;"></div>
<div class="r" style="left:2296.94px;top:510.40px;width:1.00px;height:974.25px;background:#D9D9D9;"></div>
<div class="r" style="left:2421.77px;top:510.40px;width:1.00px;height:974.25px;background:#D9D9D9;"></div>
<div class="r" style="left:2546.60px;top:510.40px;width:1.00px;height:974.25px;background:#D9D9D9;"></div>
<div class="r" style="left:2671.43px;top:510.40px;width:1.00px;height:974.25px;background:#D9D9D9;"></div>
<div class="r" style="left:2796.26px;top:510.40px;width:1.00px;height:974.25px;background:#D9D9D9;"></div>
<div class="r" style="left:2921.09px;top:510.40px;width:1.00px;height:974.25px;background:#D9D9D9;"></div>
<div class="r" style="left:3045.92px;top:510.40px;width:1.00px;height:974.25px;background:#D9D9D9;"></div>
<div class="r" style="left:3170.75px;top:510.40px;width:1.00px;height:974.25px;background:#D9D9D9;"></div>
<div class="r" style="left:3295.58px;top:510.40px;width:1.00px;height:974.25px;background:#D9D9D9;"></div>
<div class="r" style="left:3420.41px;top:510.40px;width:1.00px;height:974.25px;background:#D9D9D9;"></div>
<div class="r" style="left:3545.24px;top:510.40px;width:1.00px;height:974.25px;background:#D9D9D9;"></div>
<div class="r" style="left:3670.07px;top:510.40px;width:1.00px;height:974.25px;background:#D9D9D9;"></div>
<div class="r" style="left:58.40px;top:510.40px;width:1240.40px;height:37.45px;background:#70AD47;"></div>
<div class="r" style="left:1105.00px;top:510.40px;width:193.80px;height:37.45px;background:#C5DFB3;"></div>
<div class="r" style="left:58.40px;top:549.35px;width:1240.40px;height:37.45px;background:#E2EFDA;"></div>
<div class="r" style="left:1105.00px;top:549.35px;width:193.80px;height:37.45px;background:#C6E0B4;"></div>
<div class="r" style="left:1105.00px;top:588.30px;width:193.80px;height:37.45px;background:#C6E0B4;"></div>
<div class="r" style="left:58.40px;top:627.25px;width:1240.40px;height:37.45px;background:#E2EFDA;"></div>
<div class="r" style="left:1105.00px;top:627.25px;width:193.80px;height:37.45px;background:#C6E0B4;"></div>
<div class="r" style="left:1105.00px;top:666.20px;width:193.80px;height:37.45px;background:#C6E0B4;"></div>
<div class="r" style="left:58.40px;top:705.15px;width:1240.40px;height:37.45px;background:#E2EFDA;"></div>
<div class="r" style="left:1105.00px;top:705.15px;width:193.80px;height:37.45px;background:#C6E0B4;"></div>
<div class="r" style="left:1105.00px;top:744.10px;width:193.80px;height:37.45px;background:#C6E0B4;"></div>
<div class="r" style="left:58.40px;top:783.05px;width:1240.40px;height:37.45px;background:#E2EFDA;"></div>
<div class="r" style="left:1105.00px;top:783.05px;width:193.80px;height:37.45px;background:#C6E0B4;"></div>
<div class="r" style="left:1105.00px;top:822.00px;width:193.80px;height:37.45px;background:#C6E0B4;"></div>
<div class="r" style="left:58.40px;top:860.95px;width:1240.40px;height:37.45px;background:#E2EFDA;"></div>
<div class="r" style="left:1105.00px;top:860.95px;width:193.80px;height:37.45px;background:#C6E0B4;"></div>
<div class="r" style="left:1105.00px;top:899.90px;width:193.80px;height:37.45px;background:#C6E0B4;"></div>
<div class="r" style="left:58.40px;top:938.85px;width:1240.40px;height:37.45px;background:#E2EFDA;"></div>
<div class="r" style="left:1105.00px;top:938.85px;width:193.80px;height:37.45px;background:#C6E0B4;"></div>
<div class="r" style="left:1105.00px;top:977.80px;width:193.80px;height:37.45px;background:#C6E0B4;"></div>
<div class="r" style="left:58.40px;top:1016.75px;width:1240.40px;height:37.45px;background:#E2EFDA;"></div>
<div class="r" style="left:1105.00px;top:1016.75px;width:193.80px;height:37.45px;background:#C6E0B4;"></div>
<div class="r" style="left:1105.00px;top:1055.70px;width:193.80px;height:37.45px;background:#C6E0B4;"></div>
<div class="r" style="left:58.40px;top:1094.65px;width:1240.40px;height:37.45px;background:#E2EFDA;"></div>
<div class="r" style="left:1105.00px;top:1094.65px;width:193.80px;height:37.45px;background:#C6E0B4;"></div>
<div class="r" style="left:1105.00px;top:1133.60px;width:193.80px;height:37.45px;background:#C6E0B4;"></div>
<div class="r" style="left:58.40px;top:1172.55px;width:1240.40px;height:37.45px;background:#E2EFDA;"></div>
<div class="r" style="left:1105.00px;top:1172.55px;width:193.80px;height:37.45px;background:#C6E0B4;"></div>
<div class="r" style="left:1105.00px;top:1211.50px;width:193.80px;height:37.45px;background:#C6E0B4;"></div>
<div class="r" style="left:58.40px;top:1250.45px;width:1240.40px;height:37.45px;background:#E2EFDA;"></div>
<div class="r" style="left:1105.00px;top:1250.45px;width:193.80px;height:37.45px;background:#C6E0B4;"></div>
<div class="r" style="left:1105.00px;top:1289.40px;width:193.80px;height:37.45px;background:#C6E0B4;"></div>
<div class="r" style="left:58.40px;top:1328.35px;width:1240.40px;height:37.45px;background:#E2EFDA;"></div>
<div class="r" style="left:1105.00px;top:1328.35px;width:193.80px;height:37.45px;background:#C6E0B4;"></div>
<div class="r" style="left:1105.00px;top:1367.30px;width:193.80px;height:37.45px;background:#C6E0B4;"></div>
<div class="r" style="left:58.40px;top:1406.25px;width:1240.40px;height:37.45px;background:#E2EFDA;"></div>
<div class="r" style="left:1105.00px;top:1406.25px;width:193.80px;height:37.45px;background:#C6E0B4;"></div>
<div class="r" style="left:1105.00px;top:1445.20px;width:193.80px;height:37.45px;background:#C6E0B4;"></div>
<div class="r" style="left:58.40px;top:547.85px;width:1240.40px;height:2.00px;background:#A9D08E;"></div>
<div class="r" style="left:58.40px;top:586.80px;width:1240.40px;height:2.00px;background:#A9D08E;"></div>
<div class="r" style="left:58.40px;top:625.75px;width:1240.40px;height:2.00px;background:#A9D08E;"></div>
<div class="r" style="left:58.40px;top:664.70px;width:1240.40px;height:2.00px;background:#A9D08E;"></div>
<div class="r" style="left:58.40px;top:703.65px;width:1240.40px;height:2.00px;background:#A9D08E;"></div>
<div class="r" style="left:58.40px;top:742.60px;width:1240.40px;height:2.00px;background:#A9D08E;"></div>
<div class="r" style="left:58.40px;top:781.55px;width:1240.40px;height:2.00px;background:#A9D08E;"></div>
<div class="r" style="left:58.40px;top:820.50px;width:1240.40px;height:2.00px;background:#A9D08E;"></div>
<div class="r" style="left:58.40px;top:859.45px;width:1240.40px;height:2.00px;background:#A9D08E;"></div>
<div class="r" style="left:58.40px;top:898.40px;width:1240.40px;height:2.00px;background:#A9D08E;"></div>
<div class="r" style="left:58.40px;top:937.35px;width:1240.40px;height:2.00px;background:#A9D08E;"></div>
<div class="r" style="left:58.40px;top:976.30px;width:1240.40px;height:2.00px;background:#A9D08E;"></div>
<div class="r" style="left:58.40px;top:1015.25px;width:1240.40px;height:2.00px;background:#A9D08E;"></div>
<div class="r" style="left:58.40px;top:1054.20px;width:1240.40px;height:2.00px;background:#A9D08E;"></div>
<div class="r" style="left:58.40px;top:1093.15px;width:1240.40px;height:2.00px;background:#A9D08E;"></div>
<div class="r" style="left:58.40px;top:1132.10px;width:1240.40px;height:2.00px;background:#A9D08E;"></div>
<div class="r" style="left:58.40px;top:1171.05px;width:1240.40px;height:2.00px;background:#A9D08E;"></div>
<div class="r" style="left:58.40px;top:1210.00px;width:1240.40px;height:2.00px;background:#A9D08E;"></div>
<div class="r" style="left:58.40px;top:1248.95px;width:1240.40px;height:2.00px;background:#A9D08E;"></div>
<div class="r" style="left:58.40px;top:1287.90px;width:1240.40px;height:2.00px;background:#A9D08E;"></div>
<div class="r" style="left:58.40px;top:1326.85px;width:1240.40px;height:2.00px;background:#A9D08E;"></div>
<div class="r" style="left:58.40px;top:1365.80px;width:1240.40px;height:2.00px;background:#A9D08E;"></div>
<div class="r" style="left:58.40px;top:1404.75px;width:1240.40px;height:2.00px;background:#A9D08E;"></div>
<div class="r" style="left:58.40px;top:1443.70px;width:1240.40px;height:2.00px;background:#A9D08E;"></div>
<div class="r" style="left:58.40px;top:1482.65px;width:1240.40px;height:2.00px;background:#A9D08E;"></div>
<div class="r" style="left:1296.80px;top:510.40px;width:2.00px;height:974.25px;background:#A9D08E;"></div>
<div class="t" style="left:62.82px;top:557.45px;font-size:26.45px;line-height:26.45px;color:#000;transform:scaleX(0.9424);transform-origin:0 0;">Beverages</div>
<div class="t" style="left:283.90px;top:557.45px;font-size:26.45px;line-height:26.45px;color:#000;transform:scaleX(0.9249);transform-origin:0 0;">Chai</div>
<div class="t" style="left:701.91px;top:557.45px;font-size:26.45px;line-height:26.45px;color:#000;transform:scaleX(0.9454);transform-origin:0 0;">10 boxes x 20 bags</div>
<div class="t" style="left:1071.09px;top:557.45px;font-size:26.45px;line-height:26.45px;color:#000;transform:scaleX(1.0073);transform-origin:0 0;">18</div>
<div class="t" style="left:1264.33px;top:557.45px;font-size:26.45px;line-height:26.45px;color:#000;transform:scaleX(0.9775);transform-origin:0 0;">32</div>
<div class="t" style="left:62.82px;top:596.40px;font-size:26.45px;line-height:26.45px;color:#000;transform:scaleX(0.9424);transform-origin:0 0;">Beverages</div>
<div class="t" style="left:283.90px;top:596.40px;font-size:26.45px;line-height:26.45px;color:#000;transform:scaleX(0.9237);transform-origin:0 0;">Chang</div>
<div class="t" style="left:702.52px;top:596.40px;font-size:26.45px;line-height:26.45px;color:#000;transform:scaleX(0.9812);transform-origin:0 0;">24 - 12 oz bottles</div>
<div class="t" style="left:1071.09px;top:596.40px;font-size:26.45px;line-height:26.45px;color:#000;transform:scaleX(1.0111);transform-origin:0 0;">19</div>
<div class="t" style="left:1264.03px;top:596.40px;font-size:26.45px;line-height:26.45px;color:#000;transform:scaleX(0.9811);transform-origin:0 0;">28</div>
<div class="t" style="left:62.82px;top:635.35px;font-size:26.45px;line-height:26.45px;color:#000;transform:scaleX(0.9424);transform-origin:0 0;">Beverages</div>
<div class="t" style="left:283.96px;top:635.35px;font-size:26.45px;line-height:26.45px;color:#000;transform:scaleX(0.9532);transform-origin:0 0;">Sasquatch Ale</div>
<div class="t" style="left:702.52px;top:635.35px;font-size:26.45px;line-height:26.45px;color:#000;transform:scaleX(0.9812);transform-origin:0 0;">24 - 12 oz bottles</div>
<div class="t" style="left:1071.12px;top:635.35px;font-size:26.45px;line-height:26.45px;color:#000;transform:scaleX(0.9922);transform-origin:0 0;">14</div>
<div class="t" style="left:1264.14px;top:635.35px;font-size:26.45px;line-height:26.45px;color:#000;transform:scaleX(0.9775);transform-origin:0 0;">96</div>
<div class="t" style="left:62.82px;top:674.30px;font-size:26.45px;line-height:26.45px;color:#000;transform:scaleX(0.9424);transform-origin:0 0;">Beverages</div>
<div class="t" style="left:283.94px;top:674.30px;font-size:26.45px;line-height:26.45px;color:#000;transform:scaleX(0.9651);transform-origin:0 0;">Steeleye Stout</div>
<div class="t" style="left:702.52px;top:674.30px;font-size:26.45px;line-height:26.45px;color:#000;transform:scaleX(0.9812);transform-origin:0 0;">24 - 12 oz bottles</div>
<div class="t" style="left:1071.09px;top:674.30px;font-size:26.45px;line-height:26.45px;color:#000;transform:scaleX(1.0073);transform-origin:0 0;">18</div>
<div class="t" style="left:1264.03px;top:674.30px;font-size:26.45px;line-height:26.45px;color:#000;transform:scaleX(0.9848);transform-origin:0 0;">61</div>
<div class="t" style="left:62.82px;top:713.25px;font-size:26.45px;line-height:26.45px;color:#000;transform:scaleX(0.9424);transform-origin:0 0;">Beverages</div>
<div class="t" style="left:283.86px;top:713.25px;font-size:26.45px;line-height:26.45px;color:#000;transform:scaleX(0.9532);transform-origin:0 0;">Côte de Blaye</div>
<div class="t" style="left:701.82px;top:713.25px;font-size:26.45px;line-height:26.45px;color:#000;transform:scaleX(0.9896);transform-origin:0 0;">12 - 75 cl bottles</div>
<div class="t" style="left:1035.62px;top:713.25px;font-size:26.45px;line-height:26.45px;color:#000;transform:scaleX(0.9812);transform-origin:0 0;">263.5</div>
<div class="t" style="left:1264.05px;top:713.25px;font-size:26.45px;line-height:26.45px;color:#000;transform:scaleX(0.9668);transform-origin:0 0;">64</div>
<div class="t" style="left:62.82px;top:752.20px;font-size:26.45px;line-height:26.45px;color:#000;transform:scaleX(0.9424);transform-origin:0 0;">Beverages</div>
<div class="t" style="left:283.82px;top:752.20px;font-size:26.45px;line-height:26.45px;color:#000;transform:scaleX(0.9880);transform-origin:0 0;">Chartreuse verte</div>
<div class="t" style="left:702.50px;top:752.20px;font-size:26.45px;line-height:26.45px;color:#000;">750 cc per bottle</div>
<div class="t" style="left:1071.09px;top:752.20px;font-size:26.45px;line-height:26.45px;color:#000;transform:scaleX(1.0073);transform-origin:0 0;">18</div>
<div class="t" style="left:1264.03px;top:752.20px;font-size:26.45px;line-height:26.45px;color:#000;transform:scaleX(0.9811);transform-origin:0 0;">63</div>
<div class="t" style="left:62.82px;top:791.15px;font-size:26.45px;line-height:26.45px;color:#000;transform:scaleX(0.9424);transform-origin:0 0;">Beverages</div>
<div class="t" style="left:282.72px;top:791.15px;font-size:26.45px;line-height:26.45px;color:#000;transform:scaleX(0.9929);transform-origin:0 0;">Ipoh Coffee</div>
<div class="t" style="left:701.86px;top:791.15px;font-size:26.45px;line-height:26.45px;color:#000;transform:scaleX(0.9692);transform-origin:0 0;">16 - 500 g tins</div>
<div class="t" style="left:1072.54px;top:791.15px;font-size:26.45px;line-height:26.45px;color:#000;transform:scaleX(0.9564);transform-origin:0 0;">46</div>
<div class="t" style="left:1264.02px;top:791.15px;font-size:26.45px;line-height:26.45px;color:#000;transform:scaleX(0.9885);transform-origin:0 0;">67</div>
<div class="t" style="left:62.82px;top:830.10px;font-size:26.45px;line-height:26.45px;color:#000;transform:scaleX(0.9424);transform-origin:0 0;">Beverages</div>
<div class="t" style="left:283.09px;top:830.10px;font-size:26.45px;line-height:26.45px;color:#000;transform:scaleX(0.9582);transform-origin:0 0;">Laughing Lumberjack Lager</div>
<div class="t" style="left:702.52px;top:830.10px;font-size:26.45px;line-height:26.45px;color:#000;transform:scaleX(0.9812);transform-origin:0 0;">24 - 12 oz bottles</div>
<div class="t" style="left:1071.12px;top:830.10px;font-size:26.45px;line-height:26.45px;color:#000;transform:scaleX(0.9922);transform-origin:0 0;">14</div>
<div class="t" style="left:1264.03px;top:830.10px;font-size:26.45px;line-height:26.45px;color:#000;transform:scaleX(0.9848);transform-origin:0 0;">69</div>
<div class="t" style="left:62.82px;top:869.05px;font-size:26.45px;line-height:26.45px;color:#000;transform:scaleX(0.9424);transform-origin:0 0;">Beverages</div>
<div class="t" style="left:283.96px;top:869.05px;font-size:26.45px;line-height:26.45px;color:#000;transform:scaleX(0.9536);transform-origin:0 0;">Outback Lager</div>
<div class="t" style="left:702.51px;top:869.05px;font-size:26.45px;line-height:26.45px;color:#000;transform:scaleX(0.9952);transform-origin:0 0;">24 - 355 ml bottles</div>
<div class="t" style="left:1071.09px;top:869.05px;font-size:26.45px;line-height:26.45px;color:#000;transform:scaleX(1.0073);transform-origin:0 0;">15</div>
<div class="t" style="left:1264.02px;top:869.05px;font-size:26.45px;line-height:26.45px;color:#000;transform:scaleX(0.9885);transform-origin:0 0;">27</div>
<div class="t" style="left:62.82px;top:908.00px;font-size:26.45px;line-height:26.45px;color:#000;transform:scaleX(0.9424);transform-origin:0 0;">Beverages</div>
<div class="t" style="left:283.02px;top:908.00px;font-size:26.45px;line-height:26.45px;color:#000;transform:scaleX(0.9888);transform-origin:0 0;">Rhönbräu Klosterbier</div>
<div class="t" style="left:702.51px;top:908.00px;font-size:26.45px;line-height:26.45px;color:#000;transform:scaleX(0.9910);transform-origin:0 0;">24 - 0.5 l bottles</div>
<div class="t" style="left:1050.12px;top:908.00px;font-size:26.45px;line-height:26.45px;color:#000;transform:scaleX(0.9818);transform-origin:0 0;">7.75</div>
<div class="t" style="left:1264.25px;top:908.00px;font-size:26.45px;line-height:26.45px;color:#000;transform:scaleX(0.9598);transform-origin:0 0;">54</div>
<div class="t" style="left:62.82px;top:946.95px;font-size:26.45px;line-height:26.45px;color:#000;transform:scaleX(0.9424);transform-origin:0 0;">Beverages</div>
<div class="t" style="left:283.01px;top:946.95px;font-size:26.45px;line-height:26.45px;color:#000;transform:scaleX(0.9945);transform-origin:0 0;">Lakkalikööri</div>
<div class="t" style="left:702.70px;top:946.95px;font-size:26.45px;line-height:26.45px;color:#000;transform:scaleX(0.9956);transform-origin:0 0;">500 ml</div>
<div class="t" style="left:1071.09px;top:946.95px;font-size:26.45px;line-height:26.45px;color:#000;transform:scaleX(1.0073);transform-origin:0 0;">18</div>
<div class="t" style="left:1263.29px;top:946.95px;font-size:26.45px;line-height:26.45px;color:#000;transform:scaleX(1.0073);transform-origin:0 0;">18</div>
<div class="t" style="left:63.52px;top:985.90px;font-size:26.45px;line-height:26.45px;color:#000;transform:scaleX(0.9829);transform-origin:0 0;">Condiments</div>
<div class="t" style="left:285.10px;top:985.90px;font-size:26.45px;line-height:26.45px;color:#000;transform:scaleX(0.9480);transform-origin:0 0;">Aniseed Syrup</div>
<div class="t" style="left:701.80px;top:985.90px;font-size:26.45px;line-height:26.45px;color:#000;">12 - 550 ml bottles</div>
<div class="t" style="left:1071.10px;top:985.90px;font-size:26.45px;line-height:26.45px;color:#000;transform:scaleX(1.0034);transform-origin:0 0;">10</div>
<div class="t" style="left:1264.03px;top:985.90px;font-size:26.45px;line-height:26.45px;color:#000;transform:scaleX(0.9811);transform-origin:0 0;">26</div>
<div class="t" style="left:63.52px;top:1024.85px;font-size:26.45px;line-height:26.45px;color:#000;transform:scaleX(0.9829);transform-origin:0 0;">Condiments</div>
<div class="t" style="left:283.85px;top:1024.85px;font-size:26.45px;line-height:26.45px;color:#000;transform:scaleX(0.9605);transform-origin:0 0;">Chef Anton's Cajun Seasoning</div>
<div class="t" style="left:703.23px;top:1024.85px;font-size:26.45px;line-height:26.45px;color:#000;transform:scaleX(0.9445);transform-origin:0 0;">48 - 6 oz jars</div>
<div class="t" style="left:1071.82px;top:1024.85px;font-size:26.45px;line-height:26.45px;color:#000;transform:scaleX(0.9885);transform-origin:0 0;">22</div>
<div class="t" style="left:1264.03px;top:1024.85px;font-size:26.45px;line-height:26.45px;color:#000;transform:scaleX(0.9811);transform-origin:0 0;">25</div>
<div class="t" style="left:63.52px;top:1063.80px;font-size:26.45px;line-height:26.45px;color:#000;transform:scaleX(0.9829);transform-origin:0 0;">Condiments</div>
<div class="t" style="left:283.84px;top:1063.80px;font-size:26.45px;line-height:26.45px;color:#000;transform:scaleX(0.9685);transform-origin:0 0;">Grandma's Boysenberry Spread</div>
<div class="t" style="left:701.89px;top:1063.80px;font-size:26.45px;line-height:26.45px;color:#000;transform:scaleX(0.9533);transform-origin:0 0;">12 - 8 oz jars</div>
<div class="t" style="left:1071.83px;top:1063.80px;font-size:26.45px;line-height:26.45px;color:#000;transform:scaleX(0.9811);transform-origin:0 0;">25</div>
<div class="t" style="left:1279.27px;top:1063.80px;font-size:26.45px;line-height:26.45px;color:#000;transform:scaleX(0.8952);transform-origin:0 0;">4</div>
<div class="t" style="left:63.52px;top:1102.75px;font-size:26.45px;line-height:26.45px;color:#000;transform:scaleX(0.9829);transform-origin:0 0;">Condiments</div>
<div class="t" style="left:283.04px;top:1102.75px;font-size:26.45px;line-height:26.45px;color:#000;transform:scaleX(0.9808);transform-origin:0 0;">Northwoods Cranberry Sauce</div>
<div class="t" style="left:701.89px;top:1102.75px;font-size:26.45px;line-height:26.45px;color:#000;transform:scaleX(0.9556);transform-origin:0 0;">12 - 12 oz jars</div>
<div class="t" style="left:1072.54px;top:1102.75px;font-size:26.45px;line-height:26.45px;color:#000;transform:scaleX(0.9529);transform-origin:0 0;">40</div>
<div class="t" style="left:1278.63px;top:1102.75px;font-size:26.45px;line-height:26.45px;color:#000;transform:scaleX(0.9752);transform-origin:0 0;">9</div>
<div class="t" style="left:63.52px;top:1141.70px;font-size:26.45px;line-height:26.45px;color:#000;transform:scaleX(0.9829);transform-origin:0 0;">Condiments</div>
<div class="t" style="left:283.86px;top:1141.70px;font-size:26.45px;line-height:26.45px;color:#000;transform:scaleX(0.9567);transform-origin:0 0;">Genen Shouyu</div>
<div class="t" style="left:702.51px;top:1141.70px;font-size:26.45px;line-height:26.45px;color:#000;transform:scaleX(0.9952);transform-origin:0 0;">24 - 250 ml bottles</div>
<div class="t" style="left:1049.40px;top:1141.70px;font-size:26.45px;line-height:26.45px;color:#000;transform:scaleX(0.9960);transform-origin:0 0;">15.5</div>
<div class="t" style="left:1264.25px;top:1141.70px;font-size:26.45px;line-height:26.45px;color:#000;transform:scaleX(0.9598);transform-origin:0 0;">84</div>
<div class="t" style="left:63.52px;top:1180.65px;font-size:26.45px;line-height:26.45px;color:#000;transform:scaleX(0.9829);transform-origin:0 0;">Condiments</div>
<div class="t" style="left:283.86px;top:1180.65px;font-size:26.45px;line-height:26.45px;color:#000;transform:scaleX(0.9521);transform-origin:0 0;">Gula Malacca</div>
<div class="t" style="left:702.58px;top:1180.65px;font-size:26.45px;line-height:26.45px;color:#000;transform:scaleX(0.9351);transform-origin:0 0;">20 - 2 kg bags</div>
<div class="t" style="left:1034.91px;top:1180.65px;font-size:26.45px;line-height:26.45px;color:#000;transform:scaleX(0.9921);transform-origin:0 0;">19.45</div>
<div class="t" style="left:1264.04px;top:1180.65px;font-size:26.45px;line-height:26.45px;color:#000;transform:scaleX(0.9775);transform-origin:0 0;">20</div>
<div class="t" style="left:63.52px;top:1219.60px;font-size:26.45px;line-height:26.45px;color:#000;transform:scaleX(0.9829);transform-origin:0 0;">Condiments</div>
<div class="t" style="left:283.91px;top:1219.60px;font-size:26.45px;line-height:26.45px;color:#000;transform:scaleX(0.9876);transform-origin:0 0;">Sirop d'érable</div>
<div class="t" style="left:702.51px;top:1219.60px;font-size:26.45px;line-height:26.45px;color:#000;transform:scaleX(0.9952);transform-origin:0 0;">24 - 500 ml bottles</div>
<div class="t" style="left:1050.12px;top:1219.60px;font-size:26.45px;line-height:26.45px;color:#000;transform:scaleX(0.9818);transform-origin:0 0;">28.5</div>
<div class="t" style="left:1264.13px;top:1219.60px;font-size:26.45px;line-height:26.45px;color:#000;transform:scaleX(0.9811);transform-origin:0 0;">91</div>
<div class="t" style="left:63.52px;top:1258.55px;font-size:26.45px;line-height:26.45px;color:#000;transform:scaleX(0.9829);transform-origin:0 0;">Condiments</div>
<div class="t" style="left:285.00px;top:1258.55px;font-size:26.45px;line-height:26.45px;color:#000;transform:scaleX(0.9690);transform-origin:0 0;">Vegie-spread</div>
<div class="t" style="left:701.89px;top:1258.55px;font-size:26.45px;line-height:26.45px;color:#000;transform:scaleX(0.9565);transform-origin:0 0;">15 - 625 g jars</div>
<div class="t" style="left:1050.81px;top:1258.55px;font-size:26.45px;line-height:26.45px;color:#000;transform:scaleX(0.9699);transform-origin:0 0;">43.9</div>
<div class="t" style="left:1278.52px;top:1258.55px;font-size:26.45px;line-height:26.45px;color:#000;transform:scaleX(0.9914);transform-origin:0 0;">7</div>
<div class="t" style="left:63.52px;top:1297.50px;font-size:26.45px;line-height:26.45px;color:#000;transform:scaleX(0.9829);transform-origin:0 0;">Condiments</div>
<div class="t" style="left:283.09px;top:1297.50px;font-size:26.45px;line-height:26.45px;color:#000;transform:scaleX(0.9553);transform-origin:0 0;">Louisiana Fiery Hot Pepper Sauce</div>
<div class="t" style="left:702.82px;top:1297.50px;font-size:26.45px;line-height:26.45px;color:#000;transform:scaleX(0.9793);transform-origin:0 0;">32 - 8 oz bottles</div>
<div class="t" style="left:1035.62px;top:1297.50px;font-size:26.45px;line-height:26.45px;color:#000;transform:scaleX(0.9812);transform-origin:0 0;">21.05</div>
<div class="t" style="left:1264.23px;top:1297.50px;font-size:26.45px;line-height:26.45px;color:#000;transform:scaleX(0.9811);transform-origin:0 0;">57</div>
<div class="t" style="left:63.52px;top:1336.45px;font-size:26.45px;line-height:26.45px;color:#000;transform:scaleX(0.9829);transform-origin:0 0;">Condiments</div>
<div class="t" style="left:283.09px;top:1336.45px;font-size:26.45px;line-height:26.45px;color:#000;transform:scaleX(0.9561);transform-origin:0 0;">Louisiana Hot Spiced Okra</div>
<div class="t" style="left:702.57px;top:1336.45px;font-size:26.45px;line-height:26.45px;color:#000;transform:scaleX(0.9489);transform-origin:0 0;">24 - 8 oz jars</div>
<div class="t" style="left:1071.08px;top:1336.45px;font-size:26.45px;line-height:26.45px;color:#000;transform:scaleX(1.0150);transform-origin:0 0;">17</div>
<div class="t" style="left:1264.03px;top:1336.45px;font-size:26.45px;line-height:26.45px;color:#000;transform:scaleX(0.9848);transform-origin:0 0;">61</div>
<div class="t" style="left:63.52px;top:1375.40px;font-size:26.45px;line-height:26.45px;color:#000;transform:scaleX(0.9829);transform-origin:0 0;">Condiments</div>
<div class="t" style="left:283.92px;top:1375.40px;font-size:26.45px;line-height:26.45px;color:#000;transform:scaleX(0.9816);transform-origin:0 0;">Original Frankfurter grüne Soße</div>
<div class="t" style="left:701.88px;top:1375.40px;font-size:26.45px;line-height:26.45px;color:#000;transform:scaleX(0.9595);transform-origin:0 0;">12 boxes</div>
<div class="t" style="left:1071.09px;top:1375.40px;font-size:26.45px;line-height:26.45px;color:#000;transform:scaleX(1.0073);transform-origin:0 0;">13</div>
<div class="t" style="left:1264.34px;top:1375.40px;font-size:26.45px;line-height:26.45px;color:#000;transform:scaleX(0.9704);transform-origin:0 0;">35</div>
<div class="t" style="left:63.53px;top:1414.35px;font-size:26.45px;line-height:26.45px;color:#000;transform:scaleX(0.9793);transform-origin:0 0;">Confections</div>
<div class="t" style="left:283.13px;top:1414.35px;font-size:26.45px;line-height:26.45px;color:#000;transform:scaleX(0.9399);transform-origin:0 0;">Pavlova</div>
<div class="t" style="left:702.85px;top:1414.35px;font-size:26.45px;line-height:26.45px;color:#000;transform:scaleX(0.9487);transform-origin:0 0;">32 - 500 g boxes</div>
<div class="t" style="left:1034.91px;top:1414.35px;font-size:26.45px;line-height:26.45px;color:#000;transform:scaleX(0.9921);transform-origin:0 0;">17.45</div>
<div class="t" style="left:1263.28px;top:1414.35px;font-size:26.45px;line-height:26.45px;color:#000;transform:scaleX(1.0150);transform-origin:0 0;">17</div>
<div class="t" style="left:63.53px;top:1453.30px;font-size:26.45px;line-height:26.45px;color:#000;transform:scaleX(0.9793);transform-origin:0 0;">Confections</div>
<div class="t" style="left:284.51px;top:1453.30px;font-size:26.45px;line-height:26.45px;color:#000;transform:scaleX(0.9772);transform-origin:0 0;">Teatime Chocolate Biscuits</div>
<div class="t" style="left:701.89px;top:1453.30px;font-size:26.45px;line-height:26.45px;color:#000;transform:scaleX(0.9531);transform-origin:0 0;">10 boxes x 12 pieces</div>
<div class="t" style="left:1064.71px;top:1453.30px;font-size:26.45px;line-height:26.45px;color:#000;transform:scaleX(0.9828);transform-origin:0 0;">9.2</div>
<div class="t" style="left:1264.23px;top:1453.30px;font-size:26.45px;line-height:26.45px;color:#000;transform:scaleX(0.9775);transform-origin:0 0;">81</div>
<div class="t" style="left:62.22px;top:517.42px;font-size:27.62px;line-height:27.62px;color:#FFFFFF;font-weight:bold;transform:scaleX(0.8893);transform-origin:0 0;">CategoryName</div>
<div class="t" style="left:281.68px;top:517.42px;font-size:27.62px;line-height:27.62px;color:#FFFFFF;font-weight:bold;transform:scaleX(0.8986);transform-origin:0 0;">ProductName</div>
<div class="t" style="left:702.21px;top:517.42px;font-size:27.62px;line-height:27.62px;color:#FFFFFF;font-weight:bold;transform:scaleX(0.9016);transform-origin:0 0;">QuantityPerUnit</div>
<div class="t" style="left:953.38px;top:517.42px;font-size:27.62px;line-height:27.62px;color:#FFFFFF;font-weight:bold;transform:scaleX(0.8866);transform-origin:0 0;">UnitPrice</div>
<div class="t" style="left:1109.42px;top:517.42px;font-size:27.62px;line-height:27.62px;color:#FFFFFF;font-weight:bold;transform:scaleX(0.8608);transform-origin:0 0;">UnitsInStock</div>
<div class="r" style="left:235.70px;top:510.60px;width:37.50px;height:37.40px;background:#fff;border:1.3px solid #A8A8A8;border-radius:3px;box-sizing:border-box;"></div>
<svg class="r" style="left:247.00px;top:524.00px" width="16" height="10" viewBox="0 0 16 10"><path d="M1 1.5 L8 8.5 L15 1.5" fill="none" stroke="#444" stroke-width="1.6"/></svg>
<div class="r" style="left:655.60px;top:510.60px;width:37.50px;height:37.40px;background:#fff;border:1.3px solid #A8A8A8;border-radius:3px;box-sizing:border-box;"></div>
<svg class="r" style="left:666.90px;top:524.00px" width="16" height="10" viewBox="0 0 16 10"><path d="M1 1.5 L8 8.5 L15 1.5" fill="none" stroke="#444" stroke-width="1.6"/></svg>
<div class="r" style="left:907.20px;top:510.60px;width:37.50px;height:37.40px;background:#fff;border:1.3px solid #A8A8A8;border-radius:3px;box-sizing:border-box;"></div>
<svg class="r" style="left:918.50px;top:524.00px" width="16" height="10" viewBox="0 0 16 10"><path d="M1 1.5 L8 8.5 L15 1.5" fill="none" stroke="#444" stroke-width="1.6"/></svg>
<div class="r" style="left:1063.20px;top:510.60px;width:37.50px;height:37.40px;background:#fff;border:1.3px solid #A8A8A8;border-radius:3px;box-sizing:border-box;"></div>
<svg class="r" style="left:1074.50px;top:524.00px" width="16" height="10" viewBox="0 0 16 10"><path d="M1 1.5 L8 8.5 L15 1.5" fill="none" stroke="#444" stroke-width="1.6"/></svg>
<div class="r" style="left:1256.00px;top:510.60px;width:37.50px;height:37.40px;background:#fff;border:1.3px solid #A8A8A8;border-radius:3px;box-sizing:border-box;"></div>
<svg class="r" style="left:1267.30px;top:524.00px" width="16" height="10" viewBox="0 0 16 10"><path d="M1 1.5 L8 8.5 L15 1.5" fill="none" stroke="#444" stroke-width="1.6"/></svg>
<div class="r" style="left:0.00px;top:548.85px;width:58.40px;height:1.00px;background:#DADADA;"></div>
<div class="t" style="left:14.92px;top:517.04px;font-size:25.58px;line-height:25.58px;color:#555555;transform:scaleX(0.9500);transform-origin:0 0;">1</div>
<div class="r" style="left:0.00px;top:587.80px;width:58.40px;height:1.00px;background:#DADADA;"></div>
<div class="t" style="left:15.21px;top:557.19px;font-size:25.58px;line-height:25.58px;color:#555555;transform:scaleX(0.9500);transform-origin:0 0;">2</div>
<div class="r" style="left:0.00px;top:626.75px;width:58.40px;height:1.00px;background:#DADADA;"></div>
<div class="t" style="left:15.30px;top:596.14px;font-size:25.58px;line-height:25.58px;color:#555555;transform:scaleX(0.9500);transform-origin:0 0;">3</div>
<div class="r" style="left:0.00px;top:665.70px;width:58.40px;height:1.00px;background:#DADADA;"></div>
<div class="t" style="left:15.30px;top:635.09px;font-size:25.58px;line-height:25.58px;color:#555555;transform:scaleX(0.9500);transform-origin:0 0;">4</div>
<div class="r" style="left:0.00px;top:704.65px;width:58.40px;height:1.00px;background:#DADADA;"></div>
<div class="t" style="left:15.26px;top:674.04px;font-size:25.58px;line-height:25.58px;color:#555555;transform:scaleX(0.9500);transform-origin:0 0;">5</div>
<div class="r" style="left:0.00px;top:743.60px;width:58.40px;height:1.00px;background:#DADADA;"></div>
<div class="t" style="left:15.16px;top:712.99px;font-size:25.58px;line-height:25.58px;color:#555555;transform:scaleX(0.9500);transform-origin:0 0;">6</div>
<div class="r" style="left:0.00px;top:782.55px;width:58.40px;height:1.00px;background:#DADADA;"></div>
<div class="t" style="left:15.21px;top:751.94px;font-size:25.58px;line-height:25.58px;color:#555555;transform:scaleX(0.9500);transform-origin:0 0;">7</div>
<div class="r" style="left:0.00px;top:821.50px;width:58.40px;height:1.00px;background:#DADADA;"></div>
<div class="t" style="left:15.26px;top:790.89px;font-size:25.58px;line-height:25.58px;color:#555555;transform:scaleX(0.9500);transform-origin:0 0;">8</div>
<div class="r" style="left:0.00px;top:860.45px;width:58.40px;height:1.00px;background:#DADADA;"></div>
<div class="t" style="left:15.21px;top:829.84px;font-size:25.58px;line-height:25.58px;color:#555555;transform:scaleX(0.9500);transform-origin:0 0;">9</div>
<div class="r" style="left:0.00px;top:899.40px;width:58.40px;height:1.00px;background:#DADADA;"></div>
<div class="t" style="left:8.04px;top:868.79px;font-size:25.58px;line-height:25.58px;color:#555555;transform:scaleX(0.9500);transform-origin:0 0;">10</div>
<div class="r" style="left:0.00px;top:938.35px;width:58.40px;height:1.00px;background:#DADADA;"></div>
<div class="t" style="left:9.08px;top:907.74px;font-size:25.58px;line-height:25.58px;color:#555555;transform:scaleX(0.9500);transform-origin:0 0;">11</div>
<div class="r" style="left:0.00px;top:977.30px;width:58.40px;height:1.00px;background:#DADADA;"></div>
<div class="t" style="left:8.18px;top:946.69px;font-size:25.58px;line-height:25.58px;color:#555555;transform:scaleX(0.9500);transform-origin:0 0;">12</div>
<div class="r" style="left:0.00px;top:1016.25px;width:58.40px;height:1.00px;background:#DADADA;"></div>
<div class="t" style="left:8.13px;top:985.64px;font-size:25.58px;line-height:25.58px;color:#555555;transform:scaleX(0.9500);transform-origin:0 0;">13</div>
<div class="r" style="left:0.00px;top:1055.20px;width:58.40px;height:1.00px;background:#DADADA;"></div>
<div class="t" style="left:7.94px;top:1024.59px;font-size:25.58px;line-height:25.58px;color:#555555;transform:scaleX(0.9500);transform-origin:0 0;">14</div>
<div class="r" style="left:0.00px;top:1094.15px;width:58.40px;height:1.00px;background:#DADADA;"></div>
<div class="t" style="left:8.08px;top:1063.54px;font-size:25.58px;line-height:25.58px;color:#555555;transform:scaleX(0.9500);transform-origin:0 0;">15</div>
<div class="r" style="left:0.00px;top:1133.10px;width:58.40px;height:1.00px;background:#DADADA;"></div>
<div class="t" style="left:8.13px;top:1102.49px;font-size:25.58px;line-height:25.58px;color:#555555;transform:scaleX(0.9500);transform-origin:0 0;">16</div>
<div class="r" style="left:0.00px;top:1172.05px;width:58.40px;height:1.00px;background:#DADADA;"></div>
<div class="t" style="left:8.18px;top:1141.44px;font-size:25.58px;line-height:25.58px;color:#555555;transform:scaleX(0.9500);transform-origin:0 0;">17</div>
<div class="r" style="left:0.00px;top:1211.00px;width:58.40px;height:1.00px;background:#DADADA;"></div>
<div class="t" style="left:8.13px;top:1180.39px;font-size:25.58px;line-height:25.58px;color:#555555;transform:scaleX(0.9500);transform-origin:0 0;">18</div>
<div class="r" style="left:0.00px;top:1249.95px;width:58.40px;height:1.00px;background:#DADADA;"></div>
<div class="t" style="left:8.13px;top:1219.34px;font-size:25.58px;line-height:25.58px;color:#555555;transform:scaleX(0.9500);transform-origin:0 0;">19</div>
<div class="r" style="left:0.00px;top:1288.90px;width:58.40px;height:1.00px;background:#DADADA;"></div>
<div class="t" style="left:8.32px;top:1258.29px;font-size:25.58px;line-height:25.58px;color:#555555;transform:scaleX(0.9500);transform-origin:0 0;">20</div>
<div class="r" style="left:0.00px;top:1327.85px;width:58.40px;height:1.00px;background:#DADADA;"></div>
<div class="t" style="left:8.46px;top:1297.24px;font-size:25.58px;line-height:25.58px;color:#555555;transform:scaleX(0.9500);transform-origin:0 0;">21</div>
<div class="r" style="left:0.00px;top:1366.80px;width:58.40px;height:1.00px;background:#DADADA;"></div>
<div class="t" style="left:8.46px;top:1336.19px;font-size:25.58px;line-height:25.58px;color:#555555;transform:scaleX(0.9500);transform-origin:0 0;">22</div>
<div class="r" style="left:0.00px;top:1405.75px;width:58.40px;height:1.00px;background:#DADADA;"></div>
<div class="t" style="left:8.41px;top:1375.14px;font-size:25.58px;line-height:25.58px;color:#555555;transform:scaleX(0.9500);transform-origin:0 0;">23</div>
<div class="r" style="left:0.00px;top:1444.70px;width:58.40px;height:1.00px;background:#DADADA;"></div>
<div class="t" style="left:8.23px;top:1414.09px;font-size:25.58px;line-height:25.58px;color:#555555;transform:scaleX(0.9500);transform-origin:0 0;">24</div>
<div class="r" style="left:0.00px;top:1483.65px;width:58.40px;height:1.00px;background:#DADADA;"></div>
<div class="t" style="left:8.37px;top:1453.04px;font-size:25.58px;line-height:25.58px;color:#555555;transform:scaleX(0.9500);transform-origin:0 0;">25</div>
<div class="r" style="left:57.90px;top:473.00px;width:1.00px;height:1011.65px;background:#C8C8C8;"></div>
<div class="r" style="left:0.00px;top:509.80px;width:3776.70px;height:1.00px;background:#C8C8C8;"></div>
<div class="r" style="left:278.00px;top:473.00px;width:1.00px;height:37.00px;background:#DDDDDD;"></div>
<div class="t" style="left:159.75px;top:476.85px;font-size:26.16px;line-height:26.16px;color:#505050;">A</div>
<div class="r" style="left:697.90px;top:473.00px;width:1.00px;height:37.00px;background:#DDDDDD;"></div>
<div class="t" style="left:479.35px;top:476.85px;font-size:26.16px;line-height:26.16px;color:#505050;">B</div>
<div class="r" style="left:949.50px;top:473.00px;width:1.00px;height:37.00px;background:#DDDDDD;"></div>
<div class="t" style="left:814.60px;top:476.85px;font-size:26.16px;line-height:26.16px;color:#505050;">C</div>
<div class="r" style="left:1105.50px;top:473.00px;width:1.00px;height:37.00px;background:#DDDDDD;"></div>
<div class="t" style="left:1018.10px;top:476.85px;font-size:26.16px;line-height:26.16px;color:#505050;">D</div>
<div class="r" style="left:1298.30px;top:473.00px;width:1.00px;height:37.00px;background:#DDDDDD;"></div>
<div class="t" style="left:1193.15px;top:476.85px;font-size:26.16px;line-height:26.16px;color:#505050;">E</div>
<div class="r" style="left:1423.13px;top:473.00px;width:1.00px;height:37.00px;background:#DDDDDD;"></div>
<div class="t" style="left:1352.66px;top:476.85px;font-size:26.16px;line-height:26.16px;color:#505050;">F</div>
<div class="r" style="left:1547.96px;top:473.00px;width:1.00px;height:37.00px;background:#DDDDDD;"></div>
<div class="t" style="left:1476.20px;top:476.85px;font-size:26.16px;line-height:26.16px;color:#505050;">G</div>
<div class="r" style="left:1672.79px;top:473.00px;width:1.00px;height:37.00px;background:#DDDDDD;"></div>
<div class="t" style="left:1601.42px;top:476.85px;font-size:26.16px;line-height:26.16px;color:#505050;">H</div>
<div class="r" style="left:1797.62px;top:473.00px;width:1.00px;height:37.00px;background:#DDDDDD;"></div>
<div class="t" style="left:1732.05px;top:476.85px;font-size:26.16px;line-height:26.16px;color:#505050;">I</div>
<div class="r" style="left:1922.45px;top:473.00px;width:1.00px;height:37.00px;background:#DDDDDD;"></div>
<div class="t" style="left:1854.73px;top:476.85px;font-size:26.16px;line-height:26.16px;color:#505050;">J</div>
<div class="r" style="left:2047.28px;top:473.00px;width:1.00px;height:37.00px;background:#DDDDDD;"></div>
<div class="t" style="left:1975.71px;top:476.85px;font-size:26.16px;line-height:26.16px;color:#505050;">K</div>
<div class="r" style="left:2172.11px;top:473.00px;width:1.00px;height:37.00px;background:#DDDDDD;"></div>
<div class="t" style="left:2102.29px;top:476.85px;font-size:26.16px;line-height:26.16px;color:#505050;">L</div>
<div class="r" style="left:2296.94px;top:473.00px;width:1.00px;height:37.00px;background:#DDDDDD;"></div>
<div class="t" style="left:2224.12px;top:476.85px;font-size:26.16px;line-height:26.16px;color:#505050;">M</div>
<div class="r" style="left:2421.77px;top:473.00px;width:1.00px;height:37.00px;background:#DDDDDD;"></div>
<div class="t" style="left:2350.41px;top:476.85px;font-size:26.16px;line-height:26.16px;color:#505050;">N</div>
<div class="r" style="left:2546.60px;top:473.00px;width:1.00px;height:37.00px;background:#DDDDDD;"></div>
<div class="t" style="left:2474.49px;top:476.85px;font-size:26.16px;line-height:26.16px;color:#505050;">O</div>
<div class="r" style="left:2671.43px;top:473.00px;width:1.00px;height:37.00px;background:#DDDDDD;"></div>
<div class="t" style="left:2600.41px;top:476.85px;font-size:26.16px;line-height:26.16px;color:#505050;">P</div>
<div class="r" style="left:2796.26px;top:473.00px;width:1.00px;height:37.00px;background:#DDDDDD;"></div>
<div class="t" style="left:2724.15px;top:476.85px;font-size:26.16px;line-height:26.16px;color:#505050;">Q</div>
<div class="r" style="left:2921.09px;top:473.00px;width:1.00px;height:37.00px;background:#DDDDDD;"></div>
<div class="t" style="left:2849.28px;top:476.85px;font-size:26.16px;line-height:26.16px;color:#505050;">R</div>
<div class="r" style="left:3045.92px;top:473.00px;width:1.00px;height:37.00px;background:#DDDDDD;"></div>
<div class="t" style="left:2975.26px;top:476.85px;font-size:26.16px;line-height:26.16px;color:#505050;">S</div>
<div class="r" style="left:3170.75px;top:473.00px;width:1.00px;height:37.00px;background:#DDDDDD;"></div>
<div class="t" style="left:3100.84px;top:476.85px;font-size:26.16px;line-height:26.16px;color:#505050;">T</div>
<div class="r" style="left:3295.58px;top:473.00px;width:1.00px;height:37.00px;background:#DDDDDD;"></div>
<div class="t" style="left:3224.22px;top:476.85px;font-size:26.16px;line-height:26.16px;color:#505050;">U</div>
<div class="r" style="left:3420.41px;top:473.00px;width:1.00px;height:37.00px;background:#DDDDDD;"></div>
<div class="t" style="left:3349.74px;top:476.85px;font-size:26.16px;line-height:26.16px;color:#505050;">V</div>
<div class="r" style="left:3545.24px;top:473.00px;width:1.00px;height:37.00px;background:#DDDDDD;"></div>
<div class="t" style="left:3470.92px;top:476.85px;font-size:26.16px;line-height:26.16px;color:#505050;">W</div>
<div class="r" style="left:3670.07px;top:473.00px;width:1.00px;height:37.00px;background:#DDDDDD;"></div>
<div class="t" style="left:3599.40px;top:476.85px;font-size:26.16px;line-height:26.16px;color:#505050;">X</div>
<div class="t" style="left:3724.23px;top:476.85px;font-size:26.16px;line-height:26.16px;color:#505050;">Y</div>
<svg class="r" style="left:25.00px;top:476.00px" width="29" height="29" viewBox="0 0 29 29"><path d="M29 0 L29 29 L0 29 Z" fill="#BDBDBD"/></svg>
<div class="r" style="left:1480.50px;top:520.50px;width:1366.50px;height:886.00px;background:#FFFFFF;"></div>
<div class="r" style="left:1481.00px;top:521.00px;width:1365.50px;height:885.00px;border:2px solid #D6D6D6;box-sizing:border-box;"></div>
<div class="r" style="left:1479.00px;top:519.00px;width:1368.50px;height:888.00px;border:1px solid #217346;box-sizing:border-box;"></div>
<div class="r" style="left:1581.60px;top:1327.85px;width:1247.80px;height:1.50px;background:#D9D9D9;"></div>
<div class="t" style="left:1553.31px;top:1317.57px;font-size:21.95px;line-height:21.95px;color:#595959;transform:scaleX(0.9200);transform-origin:0 0;">0</div>
<div class="r" style="left:1581.60px;top:1237.29px;width:1247.80px;height:1.50px;background:#D9D9D9;"></div>
<div class="t" style="left:1553.59px;top:1227.01px;font-size:21.95px;line-height:21.95px;color:#595959;transform:scaleX(0.9200);transform-origin:0 0;">2</div>
<div class="r" style="left:1581.60px;top:1146.73px;width:1247.80px;height:1.50px;background:#D9D9D9;"></div>
<div class="t" style="left:1553.13px;top:1136.45px;font-size:21.95px;line-height:21.95px;color:#595959;transform:scaleX(0.9200);transform-origin:0 0;">4</div>
<div class="r" style="left:1581.60px;top:1056.17px;width:1247.80px;height:1.50px;background:#D9D9D9;"></div>
<div class="t" style="left:1553.50px;top:1045.89px;font-size:21.95px;line-height:21.95px;color:#595959;transform:scaleX(0.9200);transform-origin:0 0;">6</div>
<div class="r" style="left:1581.60px;top:965.61px;width:1247.80px;height:1.50px;background:#D9D9D9;"></div>
<div class="t" style="left:1553.40px;top:955.33px;font-size:21.95px;line-height:21.95px;color:#595959;transform:scaleX(0.9200);transform-origin:0 0;">8</div>
<div class="r" style="left:1581.60px;top:875.05px;width:1247.80px;height:1.50px;background:#D9D9D9;"></div>
<div class="t" style="left:1542.09px;top:864.77px;font-size:21.95px;line-height:21.95px;color:#595959;transform:scaleX(0.9200);transform-origin:0 0;">10</div>
<div class="r" style="left:1581.60px;top:784.49px;width:1247.80px;height:1.50px;background:#D9D9D9;"></div>
<div class="t" style="left:1542.36px;top:774.21px;font-size:21.95px;line-height:21.95px;color:#595959;transform:scaleX(0.9200);transform-origin:0 0;">12</div>
<div class="r" style="left:1581.60px;top:693.93px;width:1247.80px;height:1.50px;background:#D9D9D9;"></div>
<div class="t" style="left:1541.90px;top:683.65px;font-size:21.95px;line-height:21.95px;color:#595959;transform:scaleX(0.9200);transform-origin:0 0;">14</div>
<div class="r" style="left:1581.60px;top:603.37px;width:1247.80px;height:1.50px;background:#D9D9D9;"></div>
<div class="t" style="left:1542.27px;top:593.09px;font-size:21.95px;line-height:21.95px;color:#595959;transform:scaleX(0.9200);transform-origin:0 0;">16</div>
<div class="r" style="left:1580.85px;top:604.12px;width:1.50px;height:725.23px;background:#D9D9D9;"></div>
<div class="r" style="left:1596.70px;top:1056.92px;width:93.50px;height:271.68px;background:#ED7D31;"></div>
<div class="r" style="left:1721.60px;top:1102.20px;width:93.50px;height:226.40px;background:#ED7D31;"></div>
<div class="r" style="left:1846.50px;top:649.40px;width:93.50px;height:679.20px;background:#ED7D31;"></div>
<div class="r" style="left:1971.40px;top:1056.92px;width:93.50px;height:271.68px;background:#ED7D31;"></div>
<div class="r" style="left:2096.30px;top:1011.64px;width:93.50px;height:316.96px;background:#ED7D31;"></div>
<div class="r" style="left:2221.20px;top:830.52px;width:93.50px;height:498.08px;background:#ED7D31;"></div>
<div class="r" style="left:2346.10px;top:1147.48px;width:93.50px;height:181.12px;background:#ED7D31;"></div>
<div class="r" style="left:2471.00px;top:1056.92px;width:93.50px;height:271.68px;background:#ED7D31;"></div>
<div class="r" style="left:2595.90px;top:1056.92px;width:93.50px;height:271.68px;background:#ED7D31;"></div>
<div class="r" style="left:2720.80px;top:1192.76px;width:93.50px;height:135.84px;background:#ED7D31;"></div>
<div class="t" style="left:2062.94px;top:541.76px;font-size:32.99px;line-height:32.99px;color:#595959;transform:scaleX(1.0329);transform-origin:0 0;">'UnitsInStock'</div>
<div class="t" style="left:2145.33px;top:1366.69px;font-size:21.51px;line-height:21.51px;color:#595959;transform:scaleX(0.9832);transform-origin:0 0;">UnitsInStock</div>
<div class="r" style="left:1518px;top:1015.5px;width:0;height:0;transform:rotate(-90deg);transform-origin:0 0"><div class="t" style="left:-1.68px;top:-18.71px;font-size:22.09px;line-height:22.09px;color:#595959;transform:scaleX(0.9347);transform-origin:0 0;">Frequency</div></div>
<svg class="r" style="left:1472.00px;top:511.40px" width="16" height="16" viewBox="0 0 16 16"><circle cx="8" cy="8" r="6.2" fill="#fff" stroke="#606060" stroke-width="1.7"/></svg>
<svg class="r" style="left:2837.60px;top:511.40px" width="16" height="16" viewBox="0 0 16 16"><circle cx="8" cy="8" r="6.2" fill="#fff" stroke="#606060" stroke-width="1.7"/></svg>
<svg class="r" style="left:1472.00px;top:1397.60px" width="16" height="16" viewBox="0 0 16 16"><circle cx="8" cy="8" r="6.2" fill="#fff" stroke="#606060" stroke-width="1.7"/></svg>
<svg class="r" style="left:2836.60px;top:1396.50px" width="16" height="16" viewBox="0 0 16 16"><circle cx="8" cy="8" r="6.2" fill="#fff" stroke="#606060" stroke-width="1.7"/></svg>
<svg class="r" style="left:2156.50px;top:511.80px" width="14" height="14" viewBox="0 0 14 14"><rect x="1.2" y="1.2" width="11.6" height="11.6" rx="1.5" fill="#fff" stroke="#6a6a6a" stroke-width="2"/></svg>
<svg class="r" style="left:1473.00px;top:956.50px" width="14" height="14" viewBox="0 0 14 14"><rect x="1.2" y="1.2" width="11.6" height="11.6" rx="1.5" fill="#fff" stroke="#6a6a6a" stroke-width="2"/></svg>
<svg class="r" style="left:2840.80px;top:956.70px" width="14" height="14" viewBox="0 0 14 14"><rect x="1.2" y="1.2" width="11.6" height="11.6" rx="1.5" fill="#fff" stroke="#6a6a6a" stroke-width="2"/></svg>
<svg class="r" style="left:2156.20px;top:1399.50px" width="14" height="14" viewBox="0 0 14 14"><rect x="1.2" y="1.2" width="11.6" height="11.6" rx="1.5" fill="#fff" stroke="#6a6a6a" stroke-width="2"/></svg>
<div class="r" style="left:3776.70px;top:510.40px;width:48.30px;height:975.30px;background:#E6E7E9;"></div>
<div class="r" style="left:3777.70px;top:512.00px;width:46.20px;height:45.00px;background:#fff;border:2.7px solid #BDBFC1;box-sizing:border-box;"></div><svg class="r" style="left:3790.00px;top:524.00px" width="22" height="19" viewBox="0 0 22 19"><path d="M11 0 L22 19 L0 19 Z" fill="#737879"/></svg>
<div class="r" style="left:3777.70px;top:560.00px;width:46.20px;height:96.00px;background:#fff;border:2.7px solid #BDBFC1;box-sizing:border-box;"></div>
<div class="r" style="left:3777.40px;top:1437.40px;width:47.10px;height:47.10px;background:#fff;border:2.7px solid #BDBFC1;box-sizing:border-box;"></div><svg class="r" style="left:3789.80px;top:1453.00px" width="22" height="18.5" viewBox="0 0 22 18.5"><path d="M0 0 L22 0 L11 18.5 Z" fill="#737879"/></svg>
<div class="r" style="left:58.40px;top:1485.70px;width:3718.30px;height:47.10px;background:#E6E7E9;"></div>
<div class="r" style="left:59.00px;top:1485.70px;width:1244.70px;height:47.10px;background:#fff;border:2.7px solid #BDBFC1;box-sizing:border-box;"></div>
<div class="r" style="left:105.20px;top:1485.70px;width:4.10px;height:47.10px;background:#BDBFC1;"></div>
<svg class="r" style="left:72.80px;top:1498.40px" width="18.5" height="21.2" viewBox="0 0 18.5 21.2"><path d="M18.5 0 L18.5 21.2 L0 10.6 Z" fill="#737879"/></svg>
<div class="r" style="left:3729.00px;top:1485.70px;width:47.70px;height:47.10px;background:#fff;border:2.7px solid #BDBFC1;box-sizing:border-box;"></div><svg class="r" style="left:3744.60px;top:1498.30px" width="19" height="21.4" viewBox="0 0 19 21.4"><path d="M0 0 L19 10.7 L0 21.4 Z" fill="#737879"/></svg>
<div class="r" style="left:3825.00px;top:473.00px;width:3.00px;height:1159.00px;background:#D0D0D0;"></div>
<div class="r" style="left:3828.00px;top:0.00px;width:3.00px;height:1632.00px;background:#000000;"></div>
<svg class="r" style="left:24.00px;top:1566.00px" width="22" height="33" viewBox="0 0 22 33"><path d="M18 2.5 L4 16.5 L18 30.5" fill="none" stroke="#C0C0C0" stroke-width="2.8"/></svg>
<svg class="r" style="left:122.00px;top:1566.00px" width="22" height="33" viewBox="0 0 22 33"><path d="M4 2.5 L18 16.5 L4 30.5" fill="none" stroke="#C0C0C0" stroke-width="2.8"/></svg>
<div class="r" style="left:209.60px;top:1569.10px;width:36.70px;height:2.60px;background:#333333;"></div>
<div class="r" style="left:209.60px;top:1581.30px;width:36.70px;height:2.60px;background:#333333;"></div>
<div class="r" style="left:209.60px;top:1593.60px;width:36.70px;height:2.60px;background:#333333;"></div>
<div class="t" style="left:314.95px;top:1559.15px;font-size:41.57px;line-height:41.57px;color:#404040;transform:scaleX(1.0180);transform-origin:0 0;-webkit-text-stroke:1.1px #404040;">Alphabetical_list_of_products</div>
<div class="r" style="left:303.00px;top:1622.80px;width:574.00px;height:9.20px;background:#1E6E3E;"></div>
<div class="t" style="left:934.80px;top:1558.66px;font-size:43.75px;line-height:43.75px;color:#404040;transform:scaleX(0.8998);transform-origin:0 0;">Sheet1</div>
<div class="r" style="left:1123.00px;top:1581.00px;width:33.00px;height:2.60px;background:#404040;"></div>
<div class="r" style="left:1138.20px;top:1565.60px;width:2.60px;height:33.40px;background:#404040;"></div>
<div class="r" style="left:3606.80px;top:1562.60px;width:144.70px;height:77.40px;border:2.5px solid #EBEBEB;box-sizing:border-box;box-shadow:0 0 4px rgba(0,0,0,0.04)"></div>
<div class="t" style="left:3623.22px;top:1586.39px;font-size:38.52px;line-height:38.52px;color:#DCDCDC;transform:scaleX(0.8971);transform-origin:0 0;">Record</div>
<div class="r" style="left:0.00px;top:1630.60px;width:3825.00px;height:1.40px;background:#C4C4C4;"></div>
<div class="r" style="left:303.00px;top:1622.80px;width:574.00px;height:9.20px;background:#1E6E3E;"></div>
</body></html>
